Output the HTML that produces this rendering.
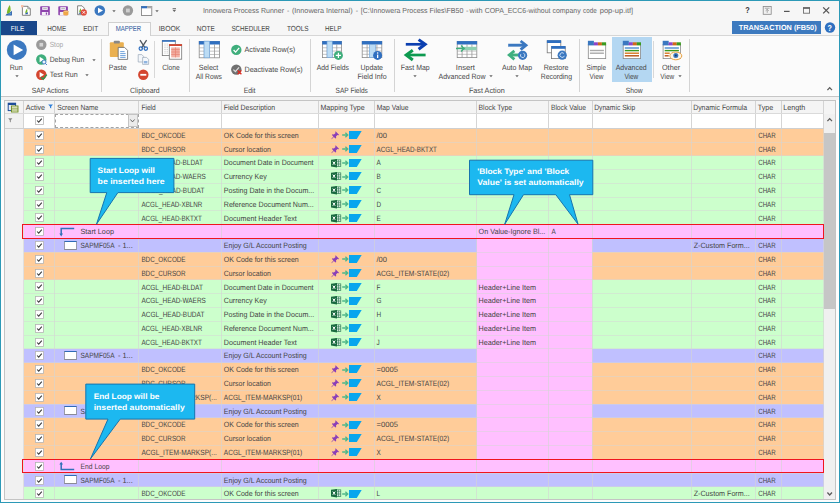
<!DOCTYPE html>
<html><head><meta charset="utf-8"><title>Innowera Process Runner</title><style>
html,body{margin:0;padding:0;}
body{width:840px;height:503px;overflow:hidden;background:#fbfbfb;font-family:"Liberation Sans",sans-serif;position:relative;}
.t{text-rendering:geometricPrecision;position:absolute;white-space:nowrap;line-height:1;transform-origin:0 0;}
.r{position:absolute;box-sizing:border-box;overflow:visible;}
</style></head><body>
<div class="r" style="left:0.00px;top:0.00px;width:840.00px;height:503.00px;background:#fdfdfd;"></div>
<div class="r" style="left:0.00px;top:0.00px;width:840.00px;height:21.00px;background:#f6f6f6;"></div>
<span class="t" style="left:202px;top:7px;font-size:7.3px;color:#666;transform:translate(0.90px,0) scaleX(0.9609);">Innowera Process Runner</span>
<span class="t" style="left:287px;top:7px;font-size:7.3px;color:#666;transform:translate(0.00px,0) scaleX(0.9460);">-</span>
<span class="t" style="left:291px;top:7px;font-size:7.3px;color:#666;transform:translate(0.90px,0) scaleX(0.9907);">(Innowera Internal)</span>
<span class="t" style="left:355px;top:7px;font-size:7.3px;color:#666;transform:translate(0.70px,0) scaleX(0.9460);">-</span>
<span class="t" style="left:360px;top:7px;font-size:7.3px;color:#666;transform:translate(0.70px,0) scaleX(0.9586);">[C:\Innowera Process</span>
<span class="t" style="left:429px;top:7px;font-size:7.3px;color:#666;transform:translate(0.50px,0) scaleX(0.9716);">Files\FB50</span>
<span class="t" style="left:465px;top:7px;font-size:7.3px;color:#666;transform:translate(0.90px,0) scaleX(0.9871);">-</span>
<span class="t" style="left:469px;top:7px;font-size:7.3px;color:#666;transform:translate(0.60px,0) scaleX(1.0091);">with</span>
<span class="t" style="left:484px;top:7px;font-size:7.3px;color:#666;transform:translate(0.70px,0) scaleX(0.9503);">COPA_ECC6-without</span>
<span class="t" style="left:552px;top:7px;font-size:7.3px;color:#666;transform:translate(0.40px,0) scaleX(0.9554);">company</span>
<span class="t" style="left:583px;top:7px;font-size:7.3px;color:#666;transform:translate(0.10px,0) scaleX(0.8591);">code</span>
<span class="t" style="left:599px;top:7px;font-size:7.3px;color:#666;transform:translate(0.70px,0) scaleX(1.0319);">pop-up.itf]</span>
<div class="r" style="left:0.00px;top:21.00px;width:840.00px;height:14.50px;background:#f6f6f6;"></div>
<div class="r" style="left:0.00px;top:35.00px;width:840.00px;height:1.00px;background:#d6d6d6;"></div>
<div class="r" style="left:1.00px;top:21.00px;width:35.50px;height:14.00px;background:#19478a;"></div>
<span class="t" style="left:10px;top:25px;font-size:7.4px;color:#fff;transform:translate(0.70px,0) scaleX(0.8638);">FILE</span>
<div class="r" style="left:108.00px;top:21.50px;width:43.00px;height:14.70px;background:#fbfbfb;border:1px solid #d0d0d0;border-bottom:none;"></div>
<span class="t" style="left:47px;top:25px;font-size:7.4px;color:#444;transform:translate(0.20px,0) scaleX(0.8558);">HOME</span>
<span class="t" style="left:83px;top:25px;font-size:7.4px;color:#444;transform:translate(0.20px,0) scaleX(0.8899);">EDIT</span>
<span class="t" style="left:115px;top:25px;font-size:7.4px;color:#2b579a;transform:translate(0.70px,0) scaleX(0.8159);">MAPPER</span>
<span class="t" style="left:158px;top:25px;font-size:7.4px;color:#444;transform:translate(0.70px,0) scaleX(0.9215);">IBOOK</span>
<span class="t" style="left:196px;top:25px;font-size:7.4px;color:#444;transform:translate(0.80px,0) scaleX(0.8805);">NOTE</span>
<span class="t" style="left:231px;top:25px;font-size:7.4px;color:#444;transform:translate(0.40px,0) scaleX(0.8435);">SCHEDULER</span>
<span class="t" style="left:286px;top:25px;font-size:7.4px;color:#444;transform:translate(0.90px,0) scaleX(0.8697);">TOOLS</span>
<span class="t" style="left:325px;top:25px;font-size:7.4px;color:#444;transform:translate(0.10px,0) scaleX(0.8432);">HELP</span>
<div class="r" style="left:731.70px;top:21.00px;width:89.10px;height:13.00px;background:#3d7abf;"></div>
<span class="t" style="left:738px;top:24px;font-size:7.4px;color:#fff;font-weight:bold;transform:translate(0.70px,0) scaleX(0.9882);">TRANSACTION (FB50)</span>
<div class="r" style="left:0.00px;top:36.00px;width:840.00px;height:59.40px;background:#fbfbfb;"></div>
<div class="r" style="left:0.00px;top:95.50px;width:840.00px;height:1.10px;background:#c6c6c6;"></div>
<div class="r" style="left:0.00px;top:96.60px;width:840.00px;height:3.40px;background:#f2f2f2;"></div>
<div class="r" style="left:101.00px;top:39.00px;width:1.00px;height:53.00px;background:#d4d4d4;"></div>
<div class="r" style="left:188.90px;top:39.00px;width:1.00px;height:53.00px;background:#d4d4d4;"></div>
<div class="r" style="left:309.90px;top:39.00px;width:1.00px;height:53.00px;background:#d4d4d4;"></div>
<div class="r" style="left:393.90px;top:39.00px;width:1.00px;height:53.00px;background:#d4d4d4;"></div>
<div class="r" style="left:578.90px;top:39.00px;width:1.00px;height:53.00px;background:#d4d4d4;"></div>
<div class="r" style="left:689.20px;top:39.00px;width:1.00px;height:53.00px;background:#d4d4d4;"></div>
<div class="r" style="left:154.00px;top:41.00px;width:1.00px;height:37.00px;background:#d8d8d8;"></div>
<div class="r" style="left:652.90px;top:41.00px;width:1.00px;height:37.00px;background:#d8d8d8;"></div>
<div class="r" style="left:612.00px;top:37.00px;width:39.50px;height:44.80px;background:#b4d7f2;"></div>
<span class="t" style="left:9px;top:64px;font-size:7.6px;color:#484848;transform:translate(0.70px,0) scaleX(0.9324);">Run</span>
<span class="t" style="left:49px;top:41px;font-size:7.6px;color:#a8a8a8;transform:translate(0.70px,0) scaleX(0.8635);">Stop</span>
<span class="t" style="left:49px;top:56px;font-size:7.6px;color:#484848;transform:translate(0.70px,0) scaleX(0.8973);">Debug Run</span>
<span class="t" style="left:49px;top:71px;font-size:7.6px;color:#484848;transform:translate(0.70px,0) scaleX(0.9336);">Test Run</span>
<span class="t" style="left:31px;top:87px;font-size:7.6px;color:#484848;transform:translate(0.70px,0) scaleX(0.8876);">SAP Actions</span>
<span class="t" style="left:108px;top:64px;font-size:7.6px;color:#484848;transform:translate(0.70px,0) scaleX(0.9262);">Paste</span>
<span class="t" style="left:162px;top:64px;font-size:7.6px;color:#484848;transform:translate(0.30px,0) scaleX(0.8762);">Clone</span>
<span class="t" style="left:130px;top:87px;font-size:7.6px;color:#484848;transform:translate(0.10px,0) scaleX(0.9099);">Clipboard</span>
<span class="t" style="left:198px;top:64px;font-size:7.6px;color:#484848;transform:translate(0.70px,0) scaleX(0.9279);">Select</span>
<span class="t" style="left:195px;top:73px;font-size:7.6px;color:#484848;transform:translate(0.70px,0) scaleX(0.8863);">All Rows</span>
<span class="t" style="left:244px;top:46px;font-size:7.6px;color:#484848;transform:translate(0.50px,0) scaleX(0.9528);">Activate Row(s)</span>
<span class="t" style="left:244px;top:66px;font-size:7.6px;color:#484848;transform:translate(0.50px,0) scaleX(0.9374);">Deactivate Row(s)</span>
<span class="t" style="left:243px;top:87px;font-size:7.6px;color:#484848;transform:translate(0.70px,0) scaleX(0.9010);">Edit</span>
<span class="t" style="left:316px;top:64px;font-size:7.6px;color:#484848;transform:translate(0.70px,0) scaleX(0.8967);">Add Fields</span>
<span class="t" style="left:360px;top:64px;font-size:7.6px;color:#484848;transform:translate(0.50px,0) scaleX(0.9181);">Update</span>
<span class="t" style="left:357px;top:73px;font-size:7.6px;color:#484848;transform:translate(0.50px,0) scaleX(0.9309);">Field Info</span>
<span class="t" style="left:335px;top:87px;font-size:7.6px;color:#484848;transform:translate(0.60px,0) scaleX(0.8623);">SAP Fields</span>
<span class="t" style="left:400px;top:64px;font-size:7.6px;color:#484848;transform:translate(0.70px,0) scaleX(0.9155);">Fast Map</span>
<span class="t" style="left:455px;top:64px;font-size:7.6px;color:#484848;transform:translate(0.80px,0) scaleX(1.0101);">Insert</span>
<span class="t" style="left:438px;top:73px;font-size:7.6px;color:#484848;transform:translate(0.50px,0) scaleX(0.9214);">Advanced Row</span>
<span class="t" style="left:468px;top:87px;font-size:7.6px;color:#484848;transform:translate(0.90px,0) scaleX(0.9522);">Fast Action</span>
<span class="t" style="left:502px;top:64px;font-size:7.6px;color:#484848;transform:translate(0.00px,0) scaleX(0.9253);">Auto Map</span>
<span class="t" style="left:543px;top:64px;font-size:7.6px;color:#484848;transform:translate(0.70px,0) scaleX(0.9319);">Restore</span>
<span class="t" style="left:540px;top:73px;font-size:7.6px;color:#484848;transform:translate(0.70px,0) scaleX(0.9035);">Recording</span>
<span class="t" style="left:586px;top:64px;font-size:7.6px;color:#484848;transform:translate(0.60px,0) scaleX(0.8351);">Simple</span>
<span class="t" style="left:589px;top:73px;font-size:7.6px;color:#484848;transform:translate(0.60px,0) scaleX(0.8447);">View</span>
<span class="t" style="left:615px;top:64px;font-size:7.6px;color:#484848;transform:translate(0.70px,0) scaleX(0.9171);">Advanced</span>
<span class="t" style="left:624px;top:73px;font-size:7.6px;color:#484848;transform:translate(0.40px,0) scaleX(0.8509);">View</span>
<span class="t" style="left:662px;top:64px;font-size:7.6px;color:#484848;transform:translate(0.00px,0) scaleX(0.9522);">Other</span>
<span class="t" style="left:660px;top:73px;font-size:7.6px;color:#484848;transform:translate(0.30px,0) scaleX(0.8509);">View</span>
<span class="t" style="left:625px;top:87px;font-size:7.6px;color:#484848;transform:translate(0.70px,0) scaleX(0.8837);">Show</span>
<svg class="r" style="left:14.80px;top:74.90px" width="4" height="2.4" viewBox="0 0 4 2.4"><path d="M0.3 0.2H3.7L2 2.2Z" fill="#666"/></svg>
<svg class="r" style="left:91.50px;top:58.70px" width="4" height="2.4" viewBox="0 0 4 2.4"><path d="M0.3 0.2H3.7L2 2.2Z" fill="#666"/></svg>
<svg class="r" style="left:85.00px;top:74.00px" width="4" height="2.4" viewBox="0 0 4 2.4"><path d="M0.3 0.2H3.7L2 2.2Z" fill="#666"/></svg>
<svg class="r" style="left:413.40px;top:74.90px" width="4" height="2.4" viewBox="0 0 4 2.4"><path d="M0.3 0.2H3.7L2 2.2Z" fill="#666"/></svg>
<svg class="r" style="left:488.50px;top:74.90px" width="4" height="2.4" viewBox="0 0 4 2.4"><path d="M0.3 0.2H3.7L2 2.2Z" fill="#666"/></svg>
<svg class="r" style="left:515.10px;top:74.90px" width="4" height="2.4" viewBox="0 0 4 2.4"><path d="M0.3 0.2H3.7L2 2.2Z" fill="#666"/></svg>
<svg class="r" style="left:677.50px;top:74.90px" width="4" height="2.4" viewBox="0 0 4 2.4"><path d="M0.3 0.2H3.7L2 2.2Z" fill="#666"/></svg>
<svg class="r" style="left:111.50px;top:9.70px" width="4" height="2.4" viewBox="0 0 4 2.4"><path d="M0.3 0.2H3.7L2 2.2Z" fill="#666"/></svg>
<svg class="r" style="left:155.00px;top:9.70px" width="4" height="2.4" viewBox="0 0 4 2.4"><path d="M0.3 0.2H3.7L2 2.2Z" fill="#666"/></svg>
<div class="r" style="left:4.00px;top:100.00px;width:831.00px;height:399.30px;background:#ffffff;"></div>
<div class="r" style="left:4.00px;top:100.00px;width:831.00px;height:13.60px;background:#f4f4f4;"></div>
<div class="r" style="left:23.50px;top:113.60px;width:800.20px;height:14.60px;background:#ffffff;"></div>
<div class="r" style="left:4.00px;top:113.60px;width:19.50px;height:385.70px;background:#f1f1f1;"></div>
<div class="r" style="left:23.50px;top:128.25px;width:800.20px;height:13.79px;background:#ffcc99;"></div>
<div class="r" style="left:23.50px;top:142.04px;width:800.20px;height:13.79px;background:#ffcc99;"></div>
<div class="r" style="left:23.50px;top:155.83px;width:800.20px;height:13.79px;background:#ccffcc;"></div>
<div class="r" style="left:23.50px;top:169.62px;width:800.20px;height:13.79px;background:#ccffcc;"></div>
<div class="r" style="left:23.50px;top:183.41px;width:800.20px;height:13.79px;background:#ccffcc;"></div>
<div class="r" style="left:23.50px;top:197.20px;width:800.20px;height:13.79px;background:#ccffcc;"></div>
<div class="r" style="left:23.50px;top:210.99px;width:800.20px;height:13.79px;background:#ccffcc;"></div>
<div class="r" style="left:23.50px;top:224.78px;width:800.20px;height:13.79px;background:#ffc0ff;"></div>
<div class="r" style="left:23.50px;top:238.57px;width:800.20px;height:13.79px;background:#c0c0ff;"></div>
<div class="r" style="left:476.60px;top:238.57px;width:115.60px;height:13.79px;background:#ffc0ff;"></div>
<div class="r" style="left:23.50px;top:252.36px;width:800.20px;height:13.79px;background:#ffcc99;"></div>
<div class="r" style="left:476.60px;top:252.36px;width:115.60px;height:13.79px;background:#ffc0ff;"></div>
<div class="r" style="left:23.50px;top:266.15px;width:800.20px;height:13.79px;background:#ffcc99;"></div>
<div class="r" style="left:476.60px;top:266.15px;width:115.60px;height:13.79px;background:#ffc0ff;"></div>
<div class="r" style="left:23.50px;top:279.94px;width:800.20px;height:13.79px;background:#ccffcc;"></div>
<div class="r" style="left:476.60px;top:279.94px;width:115.60px;height:13.79px;background:#ffc0ff;"></div>
<div class="r" style="left:23.50px;top:293.73px;width:800.20px;height:13.79px;background:#ccffcc;"></div>
<div class="r" style="left:476.60px;top:293.73px;width:115.60px;height:13.79px;background:#ffc0ff;"></div>
<div class="r" style="left:23.50px;top:307.52px;width:800.20px;height:13.79px;background:#ccffcc;"></div>
<div class="r" style="left:476.60px;top:307.52px;width:115.60px;height:13.79px;background:#ffc0ff;"></div>
<div class="r" style="left:23.50px;top:321.31px;width:800.20px;height:13.79px;background:#ccffcc;"></div>
<div class="r" style="left:476.60px;top:321.31px;width:115.60px;height:13.79px;background:#ffc0ff;"></div>
<div class="r" style="left:23.50px;top:335.10px;width:800.20px;height:13.79px;background:#ccffcc;"></div>
<div class="r" style="left:476.60px;top:335.10px;width:115.60px;height:13.79px;background:#ffc0ff;"></div>
<div class="r" style="left:23.50px;top:348.89px;width:800.20px;height:13.79px;background:#c0c0ff;"></div>
<div class="r" style="left:476.60px;top:348.89px;width:115.60px;height:13.79px;background:#ffc0ff;"></div>
<div class="r" style="left:23.50px;top:362.68px;width:800.20px;height:13.79px;background:#ffcc99;"></div>
<div class="r" style="left:476.60px;top:362.68px;width:115.60px;height:13.79px;background:#ffc0ff;"></div>
<div class="r" style="left:23.50px;top:376.47px;width:800.20px;height:13.79px;background:#ffcc99;"></div>
<div class="r" style="left:476.60px;top:376.47px;width:115.60px;height:13.79px;background:#ffc0ff;"></div>
<div class="r" style="left:23.50px;top:390.26px;width:800.20px;height:13.79px;background:#ffcc99;"></div>
<div class="r" style="left:476.60px;top:390.26px;width:115.60px;height:13.79px;background:#ffc0ff;"></div>
<div class="r" style="left:23.50px;top:404.05px;width:800.20px;height:13.79px;background:#c0c0ff;"></div>
<div class="r" style="left:476.60px;top:404.05px;width:115.60px;height:13.79px;background:#ffc0ff;"></div>
<div class="r" style="left:23.50px;top:417.84px;width:800.20px;height:13.79px;background:#ffcc99;"></div>
<div class="r" style="left:476.60px;top:417.84px;width:115.60px;height:13.79px;background:#ffc0ff;"></div>
<div class="r" style="left:23.50px;top:431.63px;width:800.20px;height:13.79px;background:#ffcc99;"></div>
<div class="r" style="left:476.60px;top:431.63px;width:115.60px;height:13.79px;background:#ffc0ff;"></div>
<div class="r" style="left:23.50px;top:445.42px;width:800.20px;height:13.79px;background:#ffcc99;"></div>
<div class="r" style="left:476.60px;top:445.42px;width:115.60px;height:13.79px;background:#ffc0ff;"></div>
<div class="r" style="left:23.50px;top:459.21px;width:800.20px;height:13.79px;background:#ffc0ff;"></div>
<div class="r" style="left:23.50px;top:473.00px;width:800.20px;height:13.79px;background:#c0c0ff;"></div>
<div class="r" style="left:23.50px;top:486.79px;width:800.20px;height:12.31px;background:#ccffcc;"></div>
<div class="r" style="left:23.50px;top:127.75px;width:800.20px;height:1.00px;background:rgba(214,214,214,0.5);"></div>
<div class="r" style="left:23.50px;top:141.54px;width:800.20px;height:1.00px;background:rgba(214,214,214,0.5);"></div>
<div class="r" style="left:23.50px;top:155.33px;width:800.20px;height:1.00px;background:rgba(214,214,214,0.5);"></div>
<div class="r" style="left:23.50px;top:169.12px;width:800.20px;height:1.00px;background:rgba(214,214,214,0.5);"></div>
<div class="r" style="left:23.50px;top:182.91px;width:800.20px;height:1.00px;background:rgba(214,214,214,0.5);"></div>
<div class="r" style="left:23.50px;top:196.70px;width:800.20px;height:1.00px;background:rgba(214,214,214,0.5);"></div>
<div class="r" style="left:23.50px;top:210.49px;width:800.20px;height:1.00px;background:rgba(214,214,214,0.5);"></div>
<div class="r" style="left:23.50px;top:224.28px;width:800.20px;height:1.00px;background:rgba(214,214,214,0.5);"></div>
<div class="r" style="left:23.50px;top:238.07px;width:800.20px;height:1.00px;background:rgba(214,214,214,0.5);"></div>
<div class="r" style="left:23.50px;top:251.86px;width:800.20px;height:1.00px;background:rgba(214,214,214,0.5);"></div>
<div class="r" style="left:23.50px;top:265.65px;width:800.20px;height:1.00px;background:rgba(214,214,214,0.5);"></div>
<div class="r" style="left:23.50px;top:279.44px;width:800.20px;height:1.00px;background:rgba(214,214,214,0.5);"></div>
<div class="r" style="left:23.50px;top:293.23px;width:800.20px;height:1.00px;background:rgba(214,214,214,0.5);"></div>
<div class="r" style="left:23.50px;top:307.02px;width:800.20px;height:1.00px;background:rgba(214,214,214,0.5);"></div>
<div class="r" style="left:23.50px;top:320.81px;width:800.20px;height:1.00px;background:rgba(214,214,214,0.5);"></div>
<div class="r" style="left:23.50px;top:334.60px;width:800.20px;height:1.00px;background:rgba(214,214,214,0.5);"></div>
<div class="r" style="left:23.50px;top:348.39px;width:800.20px;height:1.00px;background:rgba(214,214,214,0.5);"></div>
<div class="r" style="left:23.50px;top:362.18px;width:800.20px;height:1.00px;background:rgba(214,214,214,0.5);"></div>
<div class="r" style="left:23.50px;top:375.97px;width:800.20px;height:1.00px;background:rgba(214,214,214,0.5);"></div>
<div class="r" style="left:23.50px;top:389.76px;width:800.20px;height:1.00px;background:rgba(214,214,214,0.5);"></div>
<div class="r" style="left:23.50px;top:403.55px;width:800.20px;height:1.00px;background:rgba(214,214,214,0.5);"></div>
<div class="r" style="left:23.50px;top:417.34px;width:800.20px;height:1.00px;background:rgba(214,214,214,0.5);"></div>
<div class="r" style="left:23.50px;top:431.13px;width:800.20px;height:1.00px;background:rgba(214,214,214,0.5);"></div>
<div class="r" style="left:23.50px;top:444.92px;width:800.20px;height:1.00px;background:rgba(214,214,214,0.5);"></div>
<div class="r" style="left:23.50px;top:458.71px;width:800.20px;height:1.00px;background:rgba(214,214,214,0.5);"></div>
<div class="r" style="left:23.50px;top:472.50px;width:800.20px;height:1.00px;background:rgba(214,214,214,0.5);"></div>
<div class="r" style="left:23.50px;top:486.29px;width:800.20px;height:1.00px;background:rgba(214,214,214,0.5);"></div>
<div class="r" style="left:23.00px;top:100.00px;width:1.00px;height:399.30px;background:rgba(212,212,212,0.6);"></div>
<div class="r" style="left:54.10px;top:100.00px;width:1.00px;height:399.30px;background:rgba(212,212,212,0.6);"></div>
<div class="r" style="left:138.00px;top:100.00px;width:1.00px;height:399.30px;background:rgba(212,212,212,0.6);"></div>
<div class="r" style="left:221.00px;top:100.00px;width:1.00px;height:399.30px;background:rgba(212,212,212,0.6);"></div>
<div class="r" style="left:318.10px;top:100.00px;width:1.00px;height:399.30px;background:rgba(212,212,212,0.6);"></div>
<div class="r" style="left:373.90px;top:100.00px;width:1.00px;height:399.30px;background:rgba(212,212,212,0.6);"></div>
<div class="r" style="left:476.10px;top:100.00px;width:1.00px;height:399.30px;background:rgba(212,212,212,0.6);"></div>
<div class="r" style="left:548.20px;top:100.00px;width:1.00px;height:399.30px;background:rgba(212,212,212,0.6);"></div>
<div class="r" style="left:591.70px;top:100.00px;width:1.00px;height:399.30px;background:rgba(212,212,212,0.6);"></div>
<div class="r" style="left:691.00px;top:100.00px;width:1.00px;height:399.30px;background:rgba(212,212,212,0.6);"></div>
<div class="r" style="left:754.50px;top:100.00px;width:1.00px;height:399.30px;background:rgba(212,212,212,0.6);"></div>
<div class="r" style="left:781.00px;top:100.00px;width:1.00px;height:399.30px;background:rgba(212,212,212,0.6);"></div>
<div class="r" style="left:823.20px;top:100.00px;width:1.00px;height:399.30px;background:rgba(212,212,212,0.6);"></div>
<div class="r" style="left:23.00px;top:100.00px;width:1.00px;height:28.20px;background:rgba(200,200,200,0.55);"></div>
<div class="r" style="left:54.10px;top:100.00px;width:1.00px;height:28.20px;background:rgba(200,200,200,0.55);"></div>
<div class="r" style="left:138.00px;top:100.00px;width:1.00px;height:28.20px;background:rgba(200,200,200,0.55);"></div>
<div class="r" style="left:221.00px;top:100.00px;width:1.00px;height:28.20px;background:rgba(200,200,200,0.55);"></div>
<div class="r" style="left:318.10px;top:100.00px;width:1.00px;height:28.20px;background:rgba(200,200,200,0.55);"></div>
<div class="r" style="left:373.90px;top:100.00px;width:1.00px;height:28.20px;background:rgba(200,200,200,0.55);"></div>
<div class="r" style="left:476.10px;top:100.00px;width:1.00px;height:28.20px;background:rgba(200,200,200,0.55);"></div>
<div class="r" style="left:548.20px;top:100.00px;width:1.00px;height:28.20px;background:rgba(200,200,200,0.55);"></div>
<div class="r" style="left:591.70px;top:100.00px;width:1.00px;height:28.20px;background:rgba(200,200,200,0.55);"></div>
<div class="r" style="left:691.00px;top:100.00px;width:1.00px;height:28.20px;background:rgba(200,200,200,0.55);"></div>
<div class="r" style="left:754.50px;top:100.00px;width:1.00px;height:28.20px;background:rgba(200,200,200,0.55);"></div>
<div class="r" style="left:781.00px;top:100.00px;width:1.00px;height:28.20px;background:rgba(200,200,200,0.55);"></div>
<div class="r" style="left:823.20px;top:100.00px;width:1.00px;height:28.20px;background:rgba(200,200,200,0.55);"></div>
<div class="r" style="left:4.00px;top:113.10px;width:831.00px;height:1.00px;background:#dadada;"></div>
<div class="r" style="left:4.00px;top:127.70px;width:819.70px;height:1.00px;background:#cfcfcf;"></div>
<span class="t" style="left:25px;top:104px;font-size:7.6px;color:#444;transform:translate(0.70px,0) scaleX(0.9277);">Active</span>
<span class="t" style="left:57px;top:104px;font-size:7.6px;color:#444;transform:translate(0.20px,0) scaleX(0.8867);">Screen Name</span>
<span class="t" style="left:141px;top:104px;font-size:7.6px;color:#444;transform:translate(0.40px,0) scaleX(0.8681);">Field</span>
<span class="t" style="left:223px;top:104px;font-size:7.6px;color:#444;transform:translate(0.70px,0) scaleX(0.9099);">Field Description</span>
<span class="t" style="left:320px;top:104px;font-size:7.6px;color:#444;transform:translate(0.50px,0) scaleX(0.9285);">Mapping Type</span>
<span class="t" style="left:376px;top:104px;font-size:7.6px;color:#444;transform:translate(0.70px,0) scaleX(0.8890);">Map Value</span>
<span class="t" style="left:478px;top:104px;font-size:7.6px;color:#444;transform:translate(0.50px,0) scaleX(0.9099);">Block Type</span>
<span class="t" style="left:550px;top:104px;font-size:7.6px;color:#444;transform:translate(0.90px,0) scaleX(0.8845);">Block Value</span>
<span class="t" style="left:594px;top:104px;font-size:7.6px;color:#444;transform:translate(0.20px,0) scaleX(0.8825);">Dynamic Skip</span>
<span class="t" style="left:693px;top:104px;font-size:7.6px;color:#444;transform:translate(0.20px,0) scaleX(0.9068);">Dynamic Formula</span>
<span class="t" style="left:757px;top:104px;font-size:7.6px;color:#444;transform:translate(0.70px,0) scaleX(0.9407);">Type</span>
<span class="t" style="left:783px;top:104px;font-size:7.6px;color:#444;transform:translate(0.20px,0) scaleX(0.9464);">Length</span>
<svg class="r" style="left:34.70px;top:116.40px" width="8.8" height="8.8" viewBox="0 0 8.8 8.8"><rect x="0.4" y="0.4" width="8" height="8" fill="#fff" stroke="#b4b4b4" stroke-width="0.8"/><path d="M2.1 4.5L3.7 6.2L6.8 2.6" fill="none" stroke="#3c3c3c" stroke-width="1.05"/></svg>
<svg class="r" style="left:34.70px;top:130.75px" width="8.8" height="8.8" viewBox="0 0 8.8 8.8"><rect x="0.4" y="0.4" width="8" height="8" fill="#fff" stroke="#b4b4b4" stroke-width="0.8"/><path d="M2.1 4.5L3.7 6.2L6.8 2.6" fill="none" stroke="#3c3c3c" stroke-width="1.05"/></svg>
<svg class="r" style="left:34.70px;top:144.53px" width="8.8" height="8.8" viewBox="0 0 8.8 8.8"><rect x="0.4" y="0.4" width="8" height="8" fill="#fff" stroke="#b4b4b4" stroke-width="0.8"/><path d="M2.1 4.5L3.7 6.2L6.8 2.6" fill="none" stroke="#3c3c3c" stroke-width="1.05"/></svg>
<svg class="r" style="left:34.70px;top:158.32px" width="8.8" height="8.8" viewBox="0 0 8.8 8.8"><rect x="0.4" y="0.4" width="8" height="8" fill="#fff" stroke="#b4b4b4" stroke-width="0.8"/><path d="M2.1 4.5L3.7 6.2L6.8 2.6" fill="none" stroke="#3c3c3c" stroke-width="1.05"/></svg>
<svg class="r" style="left:34.70px;top:172.12px" width="8.8" height="8.8" viewBox="0 0 8.8 8.8"><rect x="0.4" y="0.4" width="8" height="8" fill="#fff" stroke="#b4b4b4" stroke-width="0.8"/><path d="M2.1 4.5L3.7 6.2L6.8 2.6" fill="none" stroke="#3c3c3c" stroke-width="1.05"/></svg>
<svg class="r" style="left:34.70px;top:185.91px" width="8.8" height="8.8" viewBox="0 0 8.8 8.8"><rect x="0.4" y="0.4" width="8" height="8" fill="#fff" stroke="#b4b4b4" stroke-width="0.8"/><path d="M2.1 4.5L3.7 6.2L6.8 2.6" fill="none" stroke="#3c3c3c" stroke-width="1.05"/></svg>
<svg class="r" style="left:34.70px;top:199.69px" width="8.8" height="8.8" viewBox="0 0 8.8 8.8"><rect x="0.4" y="0.4" width="8" height="8" fill="#fff" stroke="#b4b4b4" stroke-width="0.8"/><path d="M2.1 4.5L3.7 6.2L6.8 2.6" fill="none" stroke="#3c3c3c" stroke-width="1.05"/></svg>
<svg class="r" style="left:34.70px;top:213.49px" width="8.8" height="8.8" viewBox="0 0 8.8 8.8"><rect x="0.4" y="0.4" width="8" height="8" fill="#fff" stroke="#b4b4b4" stroke-width="0.8"/><path d="M2.1 4.5L3.7 6.2L6.8 2.6" fill="none" stroke="#3c3c3c" stroke-width="1.05"/></svg>
<svg class="r" style="left:34.70px;top:227.28px" width="8.8" height="8.8" viewBox="0 0 8.8 8.8"><rect x="0.4" y="0.4" width="8" height="8" fill="#fff" stroke="#b4b4b4" stroke-width="0.8"/><path d="M2.1 4.5L3.7 6.2L6.8 2.6" fill="none" stroke="#3c3c3c" stroke-width="1.05"/></svg>
<svg class="r" style="left:34.70px;top:241.06px" width="8.8" height="8.8" viewBox="0 0 8.8 8.8"><rect x="0.4" y="0.4" width="8" height="8" fill="#fff" stroke="#b4b4b4" stroke-width="0.8"/><path d="M2.1 4.5L3.7 6.2L6.8 2.6" fill="none" stroke="#3c3c3c" stroke-width="1.05"/></svg>
<svg class="r" style="left:34.70px;top:254.85px" width="8.8" height="8.8" viewBox="0 0 8.8 8.8"><rect x="0.4" y="0.4" width="8" height="8" fill="#fff" stroke="#b4b4b4" stroke-width="0.8"/><path d="M2.1 4.5L3.7 6.2L6.8 2.6" fill="none" stroke="#3c3c3c" stroke-width="1.05"/></svg>
<svg class="r" style="left:34.70px;top:268.64px" width="8.8" height="8.8" viewBox="0 0 8.8 8.8"><rect x="0.4" y="0.4" width="8" height="8" fill="#fff" stroke="#b4b4b4" stroke-width="0.8"/><path d="M2.1 4.5L3.7 6.2L6.8 2.6" fill="none" stroke="#3c3c3c" stroke-width="1.05"/></svg>
<svg class="r" style="left:34.70px;top:282.44px" width="8.8" height="8.8" viewBox="0 0 8.8 8.8"><rect x="0.4" y="0.4" width="8" height="8" fill="#fff" stroke="#b4b4b4" stroke-width="0.8"/><path d="M2.1 4.5L3.7 6.2L6.8 2.6" fill="none" stroke="#3c3c3c" stroke-width="1.05"/></svg>
<svg class="r" style="left:34.70px;top:296.23px" width="8.8" height="8.8" viewBox="0 0 8.8 8.8"><rect x="0.4" y="0.4" width="8" height="8" fill="#fff" stroke="#b4b4b4" stroke-width="0.8"/><path d="M2.1 4.5L3.7 6.2L6.8 2.6" fill="none" stroke="#3c3c3c" stroke-width="1.05"/></svg>
<svg class="r" style="left:34.70px;top:310.01px" width="8.8" height="8.8" viewBox="0 0 8.8 8.8"><rect x="0.4" y="0.4" width="8" height="8" fill="#fff" stroke="#b4b4b4" stroke-width="0.8"/><path d="M2.1 4.5L3.7 6.2L6.8 2.6" fill="none" stroke="#3c3c3c" stroke-width="1.05"/></svg>
<svg class="r" style="left:34.70px;top:323.81px" width="8.8" height="8.8" viewBox="0 0 8.8 8.8"><rect x="0.4" y="0.4" width="8" height="8" fill="#fff" stroke="#b4b4b4" stroke-width="0.8"/><path d="M2.1 4.5L3.7 6.2L6.8 2.6" fill="none" stroke="#3c3c3c" stroke-width="1.05"/></svg>
<svg class="r" style="left:34.70px;top:337.60px" width="8.8" height="8.8" viewBox="0 0 8.8 8.8"><rect x="0.4" y="0.4" width="8" height="8" fill="#fff" stroke="#b4b4b4" stroke-width="0.8"/><path d="M2.1 4.5L3.7 6.2L6.8 2.6" fill="none" stroke="#3c3c3c" stroke-width="1.05"/></svg>
<svg class="r" style="left:34.70px;top:351.38px" width="8.8" height="8.8" viewBox="0 0 8.8 8.8"><rect x="0.4" y="0.4" width="8" height="8" fill="#fff" stroke="#b4b4b4" stroke-width="0.8"/><path d="M2.1 4.5L3.7 6.2L6.8 2.6" fill="none" stroke="#3c3c3c" stroke-width="1.05"/></svg>
<svg class="r" style="left:34.70px;top:365.17px" width="8.8" height="8.8" viewBox="0 0 8.8 8.8"><rect x="0.4" y="0.4" width="8" height="8" fill="#fff" stroke="#b4b4b4" stroke-width="0.8"/><path d="M2.1 4.5L3.7 6.2L6.8 2.6" fill="none" stroke="#3c3c3c" stroke-width="1.05"/></svg>
<svg class="r" style="left:34.70px;top:378.96px" width="8.8" height="8.8" viewBox="0 0 8.8 8.8"><rect x="0.4" y="0.4" width="8" height="8" fill="#fff" stroke="#b4b4b4" stroke-width="0.8"/><path d="M2.1 4.5L3.7 6.2L6.8 2.6" fill="none" stroke="#3c3c3c" stroke-width="1.05"/></svg>
<svg class="r" style="left:34.70px;top:392.75px" width="8.8" height="8.8" viewBox="0 0 8.8 8.8"><rect x="0.4" y="0.4" width="8" height="8" fill="#fff" stroke="#b4b4b4" stroke-width="0.8"/><path d="M2.1 4.5L3.7 6.2L6.8 2.6" fill="none" stroke="#3c3c3c" stroke-width="1.05"/></svg>
<svg class="r" style="left:34.70px;top:406.54px" width="8.8" height="8.8" viewBox="0 0 8.8 8.8"><rect x="0.4" y="0.4" width="8" height="8" fill="#fff" stroke="#b4b4b4" stroke-width="0.8"/><path d="M2.1 4.5L3.7 6.2L6.8 2.6" fill="none" stroke="#3c3c3c" stroke-width="1.05"/></svg>
<svg class="r" style="left:34.70px;top:420.33px" width="8.8" height="8.8" viewBox="0 0 8.8 8.8"><rect x="0.4" y="0.4" width="8" height="8" fill="#fff" stroke="#b4b4b4" stroke-width="0.8"/><path d="M2.1 4.5L3.7 6.2L6.8 2.6" fill="none" stroke="#3c3c3c" stroke-width="1.05"/></svg>
<svg class="r" style="left:34.70px;top:434.12px" width="8.8" height="8.8" viewBox="0 0 8.8 8.8"><rect x="0.4" y="0.4" width="8" height="8" fill="#fff" stroke="#b4b4b4" stroke-width="0.8"/><path d="M2.1 4.5L3.7 6.2L6.8 2.6" fill="none" stroke="#3c3c3c" stroke-width="1.05"/></svg>
<svg class="r" style="left:34.70px;top:447.91px" width="8.8" height="8.8" viewBox="0 0 8.8 8.8"><rect x="0.4" y="0.4" width="8" height="8" fill="#fff" stroke="#b4b4b4" stroke-width="0.8"/><path d="M2.1 4.5L3.7 6.2L6.8 2.6" fill="none" stroke="#3c3c3c" stroke-width="1.05"/></svg>
<svg class="r" style="left:34.70px;top:461.70px" width="8.8" height="8.8" viewBox="0 0 8.8 8.8"><rect x="0.4" y="0.4" width="8" height="8" fill="#fff" stroke="#b4b4b4" stroke-width="0.8"/><path d="M2.1 4.5L3.7 6.2L6.8 2.6" fill="none" stroke="#3c3c3c" stroke-width="1.05"/></svg>
<svg class="r" style="left:34.70px;top:475.50px" width="8.8" height="8.8" viewBox="0 0 8.8 8.8"><rect x="0.4" y="0.4" width="8" height="8" fill="#fff" stroke="#b4b4b4" stroke-width="0.8"/><path d="M2.1 4.5L3.7 6.2L6.8 2.6" fill="none" stroke="#3c3c3c" stroke-width="1.05"/></svg>
<svg class="r" style="left:34.70px;top:489.28px" width="8.8" height="8.8" viewBox="0 0 8.8 8.8"><rect x="0.4" y="0.4" width="8" height="8" fill="#fff" stroke="#b4b4b4" stroke-width="0.8"/><path d="M2.1 4.5L3.7 6.2L6.8 2.6" fill="none" stroke="#3c3c3c" stroke-width="1.05"/></svg>
<span class="t" style="left:141px;top:132px;font-size:7.6px;color:#444;transform:translate(0.40px,0) scaleX(0.8306);">BDC_OKCODE</span>
<span class="t" style="left:223px;top:132px;font-size:7.6px;color:#444;transform:translate(0.80px,0) scaleX(0.9247);">OK Code for this screen</span>
<span class="t" style="left:376px;top:132px;font-size:7.6px;color:#444;transform:translate(0.50px,0) scaleX(0.9938);">/00</span>
<span class="t" style="left:758px;top:132px;font-size:7.6px;color:#444;transform:translate(0.20px,0) scaleX(0.8126);">CHAR</span>
<svg class="r" style="left:330.60px;top:130.85px" width="8.5" height="8.5" viewBox="0 0 8.5 8.5"><path d="M4.6 0.3L8.2 3.9L7.2 4.3L6.4 3.9L5 5.6L5.2 7L4.4 7.6L2.9 6.1L0.6 8.2L0.3 7.9L2.4 5.6L0.9 4.1L1.5 3.3L2.9 3.5L4.6 2.1L4.2 1.3Z" fill="#8a3fb8"/></svg>
<svg class="r" style="left:341.50px;top:132.25px" width="6.4" height="6" viewBox="0 0 6.4 6"><path d="M0.2 3H5.6M3.4 0.7L5.8 3L3.4 5.3" fill="none" stroke="#4db88a" stroke-width="1.3"/></svg>
<svg class="r" style="left:348.70px;top:131.05px" width="12.8" height="7.9" viewBox="0 0 12.8 7.9"><path d="M0 0H12.7L7.8 7.9H0Z" fill="#08a6ee"/></svg>
<span class="t" style="left:141px;top:146px;font-size:7.6px;color:#444;transform:translate(0.40px,0) scaleX(0.8307);">BDC_CURSOR</span>
<span class="t" style="left:223px;top:146px;font-size:7.6px;color:#444;transform:translate(0.80px,0) scaleX(0.9235);">Cursor location</span>
<span class="t" style="left:376px;top:146px;font-size:7.6px;color:#444;transform:translate(0.50px,0) scaleX(0.8280);">ACGL_HEAD-BKTXT</span>
<span class="t" style="left:758px;top:146px;font-size:7.6px;color:#444;transform:translate(0.20px,0) scaleX(0.8126);">CHAR</span>
<svg class="r" style="left:330.60px;top:144.64px" width="8.5" height="8.5" viewBox="0 0 8.5 8.5"><path d="M4.6 0.3L8.2 3.9L7.2 4.3L6.4 3.9L5 5.6L5.2 7L4.4 7.6L2.9 6.1L0.6 8.2L0.3 7.9L2.4 5.6L0.9 4.1L1.5 3.3L2.9 3.5L4.6 2.1L4.2 1.3Z" fill="#8a3fb8"/></svg>
<svg class="r" style="left:341.50px;top:146.04px" width="6.4" height="6" viewBox="0 0 6.4 6"><path d="M0.2 3H5.6M3.4 0.7L5.8 3L3.4 5.3" fill="none" stroke="#4db88a" stroke-width="1.3"/></svg>
<svg class="r" style="left:348.70px;top:144.84px" width="12.8" height="7.9" viewBox="0 0 12.8 7.9"><path d="M0 0H12.7L7.8 7.9H0Z" fill="#08a6ee"/></svg>
<span class="t" style="left:141px;top:159px;font-size:7.6px;color:#444;transform:translate(0.40px,0) scaleX(0.8482);">ACGL_HEAD-BLDAT</span>
<span class="t" style="left:223px;top:159px;font-size:7.6px;color:#444;transform:translate(0.80px,0) scaleX(0.9203);">Document Date in Document</span>
<span class="t" style="left:376px;top:159px;font-size:7.6px;color:#444;transform:translate(0.50px,0) scaleX(0.8400);">A</span>
<span class="t" style="left:758px;top:159px;font-size:7.6px;color:#444;transform:translate(0.20px,0) scaleX(0.8126);">CHAR</span>
<svg class="r" style="left:330.90px;top:158.53px" width="10.4" height="8.4" viewBox="0 0 10.4 8.4"><rect x="4.6" y="0.9" width="5.2" height="6.6" fill="#f4faf6" stroke="#2a7a50" stroke-width="0.7"/><path d="M7.5 0.9V7.5M5.8 2.6H9.8M5.8 4.2H9.8M5.8 5.8H9.8" stroke="#2a7a50" stroke-width="0.6"/><path d="M0 0.8L6 0V8.4L0 7.6Z" fill="#1a6a40"/><path d="M1.8 2.6L4.2 5.8M4.2 2.6L1.8 5.8" stroke="#fff" stroke-width="1"/></svg>
<svg class="r" style="left:341.50px;top:159.83px" width="6.4" height="6" viewBox="0 0 6.4 6"><path d="M0.2 3H5.6M3.4 0.7L5.8 3L3.4 5.3" fill="none" stroke="#4db88a" stroke-width="1.3"/></svg>
<svg class="r" style="left:348.70px;top:158.63px" width="12.8" height="7.9" viewBox="0 0 12.8 7.9"><path d="M0 0H12.7L7.8 7.9H0Z" fill="#08a6ee"/></svg>
<span class="t" style="left:141px;top:173px;font-size:7.6px;color:#444;transform:translate(0.40px,0) scaleX(0.8469);">ACGL_HEAD-WAERS</span>
<span class="t" style="left:223px;top:173px;font-size:7.6px;color:#444;transform:translate(0.80px,0) scaleX(0.9340);">Currency Key</span>
<span class="t" style="left:376px;top:173px;font-size:7.6px;color:#444;transform:translate(0.50px,0) scaleX(0.8400);">B</span>
<span class="t" style="left:758px;top:173px;font-size:7.6px;color:#444;transform:translate(0.20px,0) scaleX(0.8126);">CHAR</span>
<svg class="r" style="left:330.90px;top:172.32px" width="10.4" height="8.4" viewBox="0 0 10.4 8.4"><rect x="4.6" y="0.9" width="5.2" height="6.6" fill="#f4faf6" stroke="#2a7a50" stroke-width="0.7"/><path d="M7.5 0.9V7.5M5.8 2.6H9.8M5.8 4.2H9.8M5.8 5.8H9.8" stroke="#2a7a50" stroke-width="0.6"/><path d="M0 0.8L6 0V8.4L0 7.6Z" fill="#1a6a40"/><path d="M1.8 2.6L4.2 5.8M4.2 2.6L1.8 5.8" stroke="#fff" stroke-width="1"/></svg>
<svg class="r" style="left:341.50px;top:173.62px" width="6.4" height="6" viewBox="0 0 6.4 6"><path d="M0.2 3H5.6M3.4 0.7L5.8 3L3.4 5.3" fill="none" stroke="#4db88a" stroke-width="1.3"/></svg>
<svg class="r" style="left:348.70px;top:172.42px" width="12.8" height="7.9" viewBox="0 0 12.8 7.9"><path d="M0 0H12.7L7.8 7.9H0Z" fill="#08a6ee"/></svg>
<span class="t" style="left:141px;top:187px;font-size:7.6px;color:#444;transform:translate(0.40px,0) scaleX(0.8541);">ACGL_HEAD-BUDAT</span>
<span class="t" style="left:223px;top:187px;font-size:7.6px;color:#444;transform:translate(0.80px,0) scaleX(0.9355);">Posting Date in the Docum...</span>
<span class="t" style="left:376px;top:187px;font-size:7.6px;color:#444;transform:translate(0.50px,0) scaleX(0.8400);">C</span>
<span class="t" style="left:758px;top:187px;font-size:7.6px;color:#444;transform:translate(0.20px,0) scaleX(0.8126);">CHAR</span>
<svg class="r" style="left:330.90px;top:186.11px" width="10.4" height="8.4" viewBox="0 0 10.4 8.4"><rect x="4.6" y="0.9" width="5.2" height="6.6" fill="#f4faf6" stroke="#2a7a50" stroke-width="0.7"/><path d="M7.5 0.9V7.5M5.8 2.6H9.8M5.8 4.2H9.8M5.8 5.8H9.8" stroke="#2a7a50" stroke-width="0.6"/><path d="M0 0.8L6 0V8.4L0 7.6Z" fill="#1a6a40"/><path d="M1.8 2.6L4.2 5.8M4.2 2.6L1.8 5.8" stroke="#fff" stroke-width="1"/></svg>
<svg class="r" style="left:341.50px;top:187.41px" width="6.4" height="6" viewBox="0 0 6.4 6"><path d="M0.2 3H5.6M3.4 0.7L5.8 3L3.4 5.3" fill="none" stroke="#4db88a" stroke-width="1.3"/></svg>
<svg class="r" style="left:348.70px;top:186.21px" width="12.8" height="7.9" viewBox="0 0 12.8 7.9"><path d="M0 0H12.7L7.8 7.9H0Z" fill="#08a6ee"/></svg>
<span class="t" style="left:141px;top:201px;font-size:7.6px;color:#444;transform:translate(0.40px,0) scaleX(0.8253);">ACGL_HEAD-XBLNR</span>
<span class="t" style="left:223px;top:201px;font-size:7.6px;color:#444;transform:translate(0.80px,0) scaleX(0.9345);">Reference Document Num...</span>
<span class="t" style="left:376px;top:201px;font-size:7.6px;color:#444;transform:translate(0.50px,0) scaleX(0.8400);">D</span>
<span class="t" style="left:758px;top:201px;font-size:7.6px;color:#444;transform:translate(0.20px,0) scaleX(0.8126);">CHAR</span>
<svg class="r" style="left:330.90px;top:199.90px" width="10.4" height="8.4" viewBox="0 0 10.4 8.4"><rect x="4.6" y="0.9" width="5.2" height="6.6" fill="#f4faf6" stroke="#2a7a50" stroke-width="0.7"/><path d="M7.5 0.9V7.5M5.8 2.6H9.8M5.8 4.2H9.8M5.8 5.8H9.8" stroke="#2a7a50" stroke-width="0.6"/><path d="M0 0.8L6 0V8.4L0 7.6Z" fill="#1a6a40"/><path d="M1.8 2.6L4.2 5.8M4.2 2.6L1.8 5.8" stroke="#fff" stroke-width="1"/></svg>
<svg class="r" style="left:341.50px;top:201.20px" width="6.4" height="6" viewBox="0 0 6.4 6"><path d="M0.2 3H5.6M3.4 0.7L5.8 3L3.4 5.3" fill="none" stroke="#4db88a" stroke-width="1.3"/></svg>
<svg class="r" style="left:348.70px;top:200.00px" width="12.8" height="7.9" viewBox="0 0 12.8 7.9"><path d="M0 0H12.7L7.8 7.9H0Z" fill="#08a6ee"/></svg>
<span class="t" style="left:141px;top:215px;font-size:7.6px;color:#444;transform:translate(0.40px,0) scaleX(0.8280);">ACGL_HEAD-BKTXT</span>
<span class="t" style="left:223px;top:215px;font-size:7.6px;color:#444;transform:translate(0.80px,0) scaleX(0.9408);">Document Header Text</span>
<span class="t" style="left:376px;top:215px;font-size:7.6px;color:#444;transform:translate(0.50px,0) scaleX(0.8400);">E</span>
<span class="t" style="left:758px;top:215px;font-size:7.6px;color:#444;transform:translate(0.20px,0) scaleX(0.8126);">CHAR</span>
<svg class="r" style="left:330.90px;top:213.69px" width="10.4" height="8.4" viewBox="0 0 10.4 8.4"><rect x="4.6" y="0.9" width="5.2" height="6.6" fill="#f4faf6" stroke="#2a7a50" stroke-width="0.7"/><path d="M7.5 0.9V7.5M5.8 2.6H9.8M5.8 4.2H9.8M5.8 5.8H9.8" stroke="#2a7a50" stroke-width="0.6"/><path d="M0 0.8L6 0V8.4L0 7.6Z" fill="#1a6a40"/><path d="M1.8 2.6L4.2 5.8M4.2 2.6L1.8 5.8" stroke="#fff" stroke-width="1"/></svg>
<svg class="r" style="left:341.50px;top:214.99px" width="6.4" height="6" viewBox="0 0 6.4 6"><path d="M0.2 3H5.6M3.4 0.7L5.8 3L3.4 5.3" fill="none" stroke="#4db88a" stroke-width="1.3"/></svg>
<svg class="r" style="left:348.70px;top:213.79px" width="12.8" height="7.9" viewBox="0 0 12.8 7.9"><path d="M0 0H12.7L7.8 7.9H0Z" fill="#08a6ee"/></svg>
<span class="t" style="left:478px;top:228px;font-size:7.6px;color:#444;transform:translate(0.60px,0) scaleX(0.9487);">On Value-Ignore Bl...</span>
<span class="t" style="left:551px;top:228px;font-size:7.6px;color:#444;transform:translate(0.50px,0) scaleX(0.8400);">A</span>
<svg class="r" style="left:59px;top:226.78px" width="16" height="10" viewBox="0 0 16 10"><path d="M15.2 1.5H2.2V8" fill="none" stroke="#3070b8" stroke-width="1.5"/><path d="M0.4 6.6L2.2 9.4L4 6.6Z" fill="#3070b8"/></svg>
<span class="t" style="left:80px;top:228px;font-size:7.6px;color:#444;transform:translate(0.50px,0) scaleX(0.9553);">Start Loop</span>
<span class="t" style="left:223px;top:242px;font-size:7.6px;color:#444;transform:translate(0.80px,0) scaleX(0.9252);">Enjoy G/L Account Posting</span>
<span class="t" style="left:693px;top:242px;font-size:7.6px;color:#444;transform:translate(0.70px,0) scaleX(0.9406);">Z-Custom Form...</span>
<span class="t" style="left:758px;top:242px;font-size:7.6px;color:#444;transform:translate(0.20px,0) scaleX(0.8126);">CHAR</span>
<div class="r" style="left:64.3px;top:240.97px;width:12.6px;height:9px;background:#fff;border:0.8px solid #9a9aa8;border-bottom:1.1px solid #8a8a96;border-top:1.8px solid #2f6ab8"></div>
<span class="t" style="left:80px;top:242px;font-size:7.6px;color:#444;transform:translate(0.50px,0) scaleX(0.8563);">SAPMF05A</span>
<span class="t" style="left:117px;top:242px;font-size:7.6px;color:#444;transform:translate(0.90px,0) scaleX(0.9735);">- 1...</span>
<span class="t" style="left:141px;top:256px;font-size:7.6px;color:#444;transform:translate(0.40px,0) scaleX(0.8306);">BDC_OKCODE</span>
<span class="t" style="left:223px;top:256px;font-size:7.6px;color:#444;transform:translate(0.80px,0) scaleX(0.9247);">OK Code for this screen</span>
<span class="t" style="left:376px;top:256px;font-size:7.6px;color:#444;transform:translate(0.50px,0) scaleX(0.9938);">/00</span>
<span class="t" style="left:758px;top:256px;font-size:7.6px;color:#444;transform:translate(0.20px,0) scaleX(0.8126);">CHAR</span>
<svg class="r" style="left:330.60px;top:254.96px" width="8.5" height="8.5" viewBox="0 0 8.5 8.5"><path d="M4.6 0.3L8.2 3.9L7.2 4.3L6.4 3.9L5 5.6L5.2 7L4.4 7.6L2.9 6.1L0.6 8.2L0.3 7.9L2.4 5.6L0.9 4.1L1.5 3.3L2.9 3.5L4.6 2.1L4.2 1.3Z" fill="#8a3fb8"/></svg>
<svg class="r" style="left:341.50px;top:256.36px" width="6.4" height="6" viewBox="0 0 6.4 6"><path d="M0.2 3H5.6M3.4 0.7L5.8 3L3.4 5.3" fill="none" stroke="#4db88a" stroke-width="1.3"/></svg>
<svg class="r" style="left:348.70px;top:255.16px" width="12.8" height="7.9" viewBox="0 0 12.8 7.9"><path d="M0 0H12.7L7.8 7.9H0Z" fill="#08a6ee"/></svg>
<span class="t" style="left:141px;top:270px;font-size:7.6px;color:#444;transform:translate(0.40px,0) scaleX(0.8307);">BDC_CURSOR</span>
<span class="t" style="left:223px;top:270px;font-size:7.6px;color:#444;transform:translate(0.80px,0) scaleX(0.9235);">Cursor location</span>
<span class="t" style="left:376px;top:270px;font-size:7.6px;color:#444;transform:translate(0.50px,0) scaleX(0.8813);">ACGL_ITEM-STATE(02)</span>
<span class="t" style="left:758px;top:270px;font-size:7.6px;color:#444;transform:translate(0.20px,0) scaleX(0.8126);">CHAR</span>
<svg class="r" style="left:330.60px;top:268.75px" width="8.5" height="8.5" viewBox="0 0 8.5 8.5"><path d="M4.6 0.3L8.2 3.9L7.2 4.3L6.4 3.9L5 5.6L5.2 7L4.4 7.6L2.9 6.1L0.6 8.2L0.3 7.9L2.4 5.6L0.9 4.1L1.5 3.3L2.9 3.5L4.6 2.1L4.2 1.3Z" fill="#8a3fb8"/></svg>
<svg class="r" style="left:341.50px;top:270.15px" width="6.4" height="6" viewBox="0 0 6.4 6"><path d="M0.2 3H5.6M3.4 0.7L5.8 3L3.4 5.3" fill="none" stroke="#4db88a" stroke-width="1.3"/></svg>
<svg class="r" style="left:348.70px;top:268.95px" width="12.8" height="7.9" viewBox="0 0 12.8 7.9"><path d="M0 0H12.7L7.8 7.9H0Z" fill="#08a6ee"/></svg>
<span class="t" style="left:141px;top:284px;font-size:7.6px;color:#444;transform:translate(0.40px,0) scaleX(0.8482);">ACGL_HEAD-BLDAT</span>
<span class="t" style="left:223px;top:284px;font-size:7.6px;color:#444;transform:translate(0.80px,0) scaleX(0.9203);">Document Date in Document</span>
<span class="t" style="left:376px;top:284px;font-size:7.6px;color:#444;transform:translate(0.50px,0) scaleX(0.8400);">F</span>
<span class="t" style="left:478px;top:284px;font-size:7.6px;color:#444;transform:translate(0.60px,0) scaleX(0.9484);">Header+Line Item</span>
<span class="t" style="left:758px;top:284px;font-size:7.6px;color:#444;transform:translate(0.20px,0) scaleX(0.8126);">CHAR</span>
<svg class="r" style="left:330.90px;top:282.64px" width="10.4" height="8.4" viewBox="0 0 10.4 8.4"><rect x="4.6" y="0.9" width="5.2" height="6.6" fill="#f4faf6" stroke="#2a7a50" stroke-width="0.7"/><path d="M7.5 0.9V7.5M5.8 2.6H9.8M5.8 4.2H9.8M5.8 5.8H9.8" stroke="#2a7a50" stroke-width="0.6"/><path d="M0 0.8L6 0V8.4L0 7.6Z" fill="#1a6a40"/><path d="M1.8 2.6L4.2 5.8M4.2 2.6L1.8 5.8" stroke="#fff" stroke-width="1"/></svg>
<svg class="r" style="left:341.50px;top:283.94px" width="6.4" height="6" viewBox="0 0 6.4 6"><path d="M0.2 3H5.6M3.4 0.7L5.8 3L3.4 5.3" fill="none" stroke="#4db88a" stroke-width="1.3"/></svg>
<svg class="r" style="left:348.70px;top:282.74px" width="12.8" height="7.9" viewBox="0 0 12.8 7.9"><path d="M0 0H12.7L7.8 7.9H0Z" fill="#08a6ee"/></svg>
<span class="t" style="left:141px;top:297px;font-size:7.6px;color:#444;transform:translate(0.40px,0) scaleX(0.8469);">ACGL_HEAD-WAERS</span>
<span class="t" style="left:223px;top:297px;font-size:7.6px;color:#444;transform:translate(0.80px,0) scaleX(0.9340);">Currency Key</span>
<span class="t" style="left:376px;top:297px;font-size:7.6px;color:#444;transform:translate(0.50px,0) scaleX(0.8400);">G</span>
<span class="t" style="left:478px;top:297px;font-size:7.6px;color:#444;transform:translate(0.60px,0) scaleX(0.9484);">Header+Line Item</span>
<span class="t" style="left:758px;top:297px;font-size:7.6px;color:#444;transform:translate(0.20px,0) scaleX(0.8126);">CHAR</span>
<svg class="r" style="left:330.90px;top:296.43px" width="10.4" height="8.4" viewBox="0 0 10.4 8.4"><rect x="4.6" y="0.9" width="5.2" height="6.6" fill="#f4faf6" stroke="#2a7a50" stroke-width="0.7"/><path d="M7.5 0.9V7.5M5.8 2.6H9.8M5.8 4.2H9.8M5.8 5.8H9.8" stroke="#2a7a50" stroke-width="0.6"/><path d="M0 0.8L6 0V8.4L0 7.6Z" fill="#1a6a40"/><path d="M1.8 2.6L4.2 5.8M4.2 2.6L1.8 5.8" stroke="#fff" stroke-width="1"/></svg>
<svg class="r" style="left:341.50px;top:297.73px" width="6.4" height="6" viewBox="0 0 6.4 6"><path d="M0.2 3H5.6M3.4 0.7L5.8 3L3.4 5.3" fill="none" stroke="#4db88a" stroke-width="1.3"/></svg>
<svg class="r" style="left:348.70px;top:296.53px" width="12.8" height="7.9" viewBox="0 0 12.8 7.9"><path d="M0 0H12.7L7.8 7.9H0Z" fill="#08a6ee"/></svg>
<span class="t" style="left:141px;top:311px;font-size:7.6px;color:#444;transform:translate(0.40px,0) scaleX(0.8541);">ACGL_HEAD-BUDAT</span>
<span class="t" style="left:223px;top:311px;font-size:7.6px;color:#444;transform:translate(0.80px,0) scaleX(0.9355);">Posting Date in the Docum...</span>
<span class="t" style="left:376px;top:311px;font-size:7.6px;color:#444;transform:translate(0.50px,0) scaleX(0.8400);">H</span>
<span class="t" style="left:478px;top:311px;font-size:7.6px;color:#444;transform:translate(0.60px,0) scaleX(0.9484);">Header+Line Item</span>
<span class="t" style="left:758px;top:311px;font-size:7.6px;color:#444;transform:translate(0.20px,0) scaleX(0.8126);">CHAR</span>
<svg class="r" style="left:330.90px;top:310.22px" width="10.4" height="8.4" viewBox="0 0 10.4 8.4"><rect x="4.6" y="0.9" width="5.2" height="6.6" fill="#f4faf6" stroke="#2a7a50" stroke-width="0.7"/><path d="M7.5 0.9V7.5M5.8 2.6H9.8M5.8 4.2H9.8M5.8 5.8H9.8" stroke="#2a7a50" stroke-width="0.6"/><path d="M0 0.8L6 0V8.4L0 7.6Z" fill="#1a6a40"/><path d="M1.8 2.6L4.2 5.8M4.2 2.6L1.8 5.8" stroke="#fff" stroke-width="1"/></svg>
<svg class="r" style="left:341.50px;top:311.52px" width="6.4" height="6" viewBox="0 0 6.4 6"><path d="M0.2 3H5.6M3.4 0.7L5.8 3L3.4 5.3" fill="none" stroke="#4db88a" stroke-width="1.3"/></svg>
<svg class="r" style="left:348.70px;top:310.32px" width="12.8" height="7.9" viewBox="0 0 12.8 7.9"><path d="M0 0H12.7L7.8 7.9H0Z" fill="#08a6ee"/></svg>
<span class="t" style="left:141px;top:325px;font-size:7.6px;color:#444;transform:translate(0.40px,0) scaleX(0.8253);">ACGL_HEAD-XBLNR</span>
<span class="t" style="left:223px;top:325px;font-size:7.6px;color:#444;transform:translate(0.80px,0) scaleX(0.9345);">Reference Document Num...</span>
<span class="t" style="left:376px;top:325px;font-size:7.6px;color:#444;transform:translate(0.50px,0) scaleX(0.8400);">I</span>
<span class="t" style="left:478px;top:325px;font-size:7.6px;color:#444;transform:translate(0.60px,0) scaleX(0.9484);">Header+Line Item</span>
<span class="t" style="left:758px;top:325px;font-size:7.6px;color:#444;transform:translate(0.20px,0) scaleX(0.8126);">CHAR</span>
<svg class="r" style="left:330.90px;top:324.01px" width="10.4" height="8.4" viewBox="0 0 10.4 8.4"><rect x="4.6" y="0.9" width="5.2" height="6.6" fill="#f4faf6" stroke="#2a7a50" stroke-width="0.7"/><path d="M7.5 0.9V7.5M5.8 2.6H9.8M5.8 4.2H9.8M5.8 5.8H9.8" stroke="#2a7a50" stroke-width="0.6"/><path d="M0 0.8L6 0V8.4L0 7.6Z" fill="#1a6a40"/><path d="M1.8 2.6L4.2 5.8M4.2 2.6L1.8 5.8" stroke="#fff" stroke-width="1"/></svg>
<svg class="r" style="left:341.50px;top:325.31px" width="6.4" height="6" viewBox="0 0 6.4 6"><path d="M0.2 3H5.6M3.4 0.7L5.8 3L3.4 5.3" fill="none" stroke="#4db88a" stroke-width="1.3"/></svg>
<svg class="r" style="left:348.70px;top:324.11px" width="12.8" height="7.9" viewBox="0 0 12.8 7.9"><path d="M0 0H12.7L7.8 7.9H0Z" fill="#08a6ee"/></svg>
<span class="t" style="left:141px;top:339px;font-size:7.6px;color:#444;transform:translate(0.40px,0) scaleX(0.8280);">ACGL_HEAD-BKTXT</span>
<span class="t" style="left:223px;top:339px;font-size:7.6px;color:#444;transform:translate(0.80px,0) scaleX(0.9408);">Document Header Text</span>
<span class="t" style="left:376px;top:339px;font-size:7.6px;color:#444;transform:translate(0.50px,0) scaleX(0.8400);">J</span>
<span class="t" style="left:478px;top:339px;font-size:7.6px;color:#444;transform:translate(0.60px,0) scaleX(0.9484);">Header+Line Item</span>
<span class="t" style="left:758px;top:339px;font-size:7.6px;color:#444;transform:translate(0.20px,0) scaleX(0.8126);">CHAR</span>
<svg class="r" style="left:330.90px;top:337.80px" width="10.4" height="8.4" viewBox="0 0 10.4 8.4"><rect x="4.6" y="0.9" width="5.2" height="6.6" fill="#f4faf6" stroke="#2a7a50" stroke-width="0.7"/><path d="M7.5 0.9V7.5M5.8 2.6H9.8M5.8 4.2H9.8M5.8 5.8H9.8" stroke="#2a7a50" stroke-width="0.6"/><path d="M0 0.8L6 0V8.4L0 7.6Z" fill="#1a6a40"/><path d="M1.8 2.6L4.2 5.8M4.2 2.6L1.8 5.8" stroke="#fff" stroke-width="1"/></svg>
<svg class="r" style="left:341.50px;top:339.10px" width="6.4" height="6" viewBox="0 0 6.4 6"><path d="M0.2 3H5.6M3.4 0.7L5.8 3L3.4 5.3" fill="none" stroke="#4db88a" stroke-width="1.3"/></svg>
<svg class="r" style="left:348.70px;top:337.90px" width="12.8" height="7.9" viewBox="0 0 12.8 7.9"><path d="M0 0H12.7L7.8 7.9H0Z" fill="#08a6ee"/></svg>
<span class="t" style="left:223px;top:352px;font-size:7.6px;color:#444;transform:translate(0.80px,0) scaleX(0.9252);">Enjoy G/L Account Posting</span>
<span class="t" style="left:758px;top:352px;font-size:7.6px;color:#444;transform:translate(0.20px,0) scaleX(0.8126);">CHAR</span>
<div class="r" style="left:64.3px;top:351.29px;width:12.6px;height:9px;background:#fff;border:0.8px solid #9a9aa8;border-bottom:1.1px solid #8a8a96;border-top:1.8px solid #2f6ab8"></div>
<span class="t" style="left:80px;top:352px;font-size:7.6px;color:#444;transform:translate(0.50px,0) scaleX(0.8563);">SAPMF05A</span>
<span class="t" style="left:117px;top:352px;font-size:7.6px;color:#444;transform:translate(0.90px,0) scaleX(0.9735);">- 1...</span>
<span class="t" style="left:141px;top:366px;font-size:7.6px;color:#444;transform:translate(0.40px,0) scaleX(0.8306);">BDC_OKCODE</span>
<span class="t" style="left:223px;top:366px;font-size:7.6px;color:#444;transform:translate(0.80px,0) scaleX(0.9247);">OK Code for this screen</span>
<span class="t" style="left:376px;top:366px;font-size:7.6px;color:#444;transform:translate(0.50px,0) scaleX(1.0072);">=0005</span>
<span class="t" style="left:758px;top:366px;font-size:7.6px;color:#444;transform:translate(0.20px,0) scaleX(0.8126);">CHAR</span>
<svg class="r" style="left:330.60px;top:365.28px" width="8.5" height="8.5" viewBox="0 0 8.5 8.5"><path d="M4.6 0.3L8.2 3.9L7.2 4.3L6.4 3.9L5 5.6L5.2 7L4.4 7.6L2.9 6.1L0.6 8.2L0.3 7.9L2.4 5.6L0.9 4.1L1.5 3.3L2.9 3.5L4.6 2.1L4.2 1.3Z" fill="#8a3fb8"/></svg>
<svg class="r" style="left:341.50px;top:366.68px" width="6.4" height="6" viewBox="0 0 6.4 6"><path d="M0.2 3H5.6M3.4 0.7L5.8 3L3.4 5.3" fill="none" stroke="#4db88a" stroke-width="1.3"/></svg>
<svg class="r" style="left:348.70px;top:365.48px" width="12.8" height="7.9" viewBox="0 0 12.8 7.9"><path d="M0 0H12.7L7.8 7.9H0Z" fill="#08a6ee"/></svg>
<span class="t" style="left:141px;top:380px;font-size:7.6px;color:#444;transform:translate(0.40px,0) scaleX(0.8307);">BDC_CURSOR</span>
<span class="t" style="left:223px;top:380px;font-size:7.6px;color:#444;transform:translate(0.80px,0) scaleX(0.9235);">Cursor location</span>
<span class="t" style="left:376px;top:380px;font-size:7.6px;color:#444;transform:translate(0.50px,0) scaleX(0.8813);">ACGL_ITEM-STATE(02)</span>
<span class="t" style="left:758px;top:380px;font-size:7.6px;color:#444;transform:translate(0.20px,0) scaleX(0.8126);">CHAR</span>
<svg class="r" style="left:330.60px;top:379.07px" width="8.5" height="8.5" viewBox="0 0 8.5 8.5"><path d="M4.6 0.3L8.2 3.9L7.2 4.3L6.4 3.9L5 5.6L5.2 7L4.4 7.6L2.9 6.1L0.6 8.2L0.3 7.9L2.4 5.6L0.9 4.1L1.5 3.3L2.9 3.5L4.6 2.1L4.2 1.3Z" fill="#8a3fb8"/></svg>
<svg class="r" style="left:341.50px;top:380.47px" width="6.4" height="6" viewBox="0 0 6.4 6"><path d="M0.2 3H5.6M3.4 0.7L5.8 3L3.4 5.3" fill="none" stroke="#4db88a" stroke-width="1.3"/></svg>
<svg class="r" style="left:348.70px;top:379.27px" width="12.8" height="7.9" viewBox="0 0 12.8 7.9"><path d="M0 0H12.7L7.8 7.9H0Z" fill="#08a6ee"/></svg>
<span class="t" style="left:141px;top:394px;font-size:7.6px;color:#444;transform:translate(0.40px,0) scaleX(0.8721);">ACGL_ITEM-MARKSP(...</span>
<span class="t" style="left:223px;top:394px;font-size:7.6px;color:#444;transform:translate(0.80px,0) scaleX(0.8605);">ACGL_ITEM-MARKSP(01)</span>
<span class="t" style="left:376px;top:394px;font-size:7.6px;color:#444;transform:translate(0.50px,0) scaleX(0.8400);">X</span>
<span class="t" style="left:758px;top:394px;font-size:7.6px;color:#444;transform:translate(0.20px,0) scaleX(0.8126);">CHAR</span>
<svg class="r" style="left:330.60px;top:392.86px" width="8.5" height="8.5" viewBox="0 0 8.5 8.5"><path d="M4.6 0.3L8.2 3.9L7.2 4.3L6.4 3.9L5 5.6L5.2 7L4.4 7.6L2.9 6.1L0.6 8.2L0.3 7.9L2.4 5.6L0.9 4.1L1.5 3.3L2.9 3.5L4.6 2.1L4.2 1.3Z" fill="#8a3fb8"/></svg>
<svg class="r" style="left:341.50px;top:394.26px" width="6.4" height="6" viewBox="0 0 6.4 6"><path d="M0.2 3H5.6M3.4 0.7L5.8 3L3.4 5.3" fill="none" stroke="#4db88a" stroke-width="1.3"/></svg>
<svg class="r" style="left:348.70px;top:393.06px" width="12.8" height="7.9" viewBox="0 0 12.8 7.9"><path d="M0 0H12.7L7.8 7.9H0Z" fill="#08a6ee"/></svg>
<span class="t" style="left:223px;top:408px;font-size:7.6px;color:#444;transform:translate(0.80px,0) scaleX(0.9252);">Enjoy G/L Account Posting</span>
<span class="t" style="left:758px;top:408px;font-size:7.6px;color:#444;transform:translate(0.20px,0) scaleX(0.8126);">CHAR</span>
<div class="r" style="left:64.3px;top:406.45px;width:12.6px;height:9px;background:#fff;border:0.8px solid #9a9aa8;border-bottom:1.1px solid #8a8a96;border-top:1.8px solid #2f6ab8"></div>
<span class="t" style="left:80px;top:408px;font-size:7.6px;color:#444;transform:translate(0.50px,0) scaleX(0.8563);">SAPMF05A</span>
<span class="t" style="left:117px;top:408px;font-size:7.6px;color:#444;transform:translate(0.90px,0) scaleX(0.9735);">- 1...</span>
<span class="t" style="left:141px;top:421px;font-size:7.6px;color:#444;transform:translate(0.40px,0) scaleX(0.8306);">BDC_OKCODE</span>
<span class="t" style="left:223px;top:421px;font-size:7.6px;color:#444;transform:translate(0.80px,0) scaleX(0.9247);">OK Code for this screen</span>
<span class="t" style="left:376px;top:421px;font-size:7.6px;color:#444;transform:translate(0.50px,0) scaleX(1.0072);">=0005</span>
<span class="t" style="left:758px;top:421px;font-size:7.6px;color:#444;transform:translate(0.20px,0) scaleX(0.8126);">CHAR</span>
<svg class="r" style="left:330.60px;top:420.44px" width="8.5" height="8.5" viewBox="0 0 8.5 8.5"><path d="M4.6 0.3L8.2 3.9L7.2 4.3L6.4 3.9L5 5.6L5.2 7L4.4 7.6L2.9 6.1L0.6 8.2L0.3 7.9L2.4 5.6L0.9 4.1L1.5 3.3L2.9 3.5L4.6 2.1L4.2 1.3Z" fill="#8a3fb8"/></svg>
<svg class="r" style="left:341.50px;top:421.84px" width="6.4" height="6" viewBox="0 0 6.4 6"><path d="M0.2 3H5.6M3.4 0.7L5.8 3L3.4 5.3" fill="none" stroke="#4db88a" stroke-width="1.3"/></svg>
<svg class="r" style="left:348.70px;top:420.64px" width="12.8" height="7.9" viewBox="0 0 12.8 7.9"><path d="M0 0H12.7L7.8 7.9H0Z" fill="#08a6ee"/></svg>
<span class="t" style="left:141px;top:435px;font-size:7.6px;color:#444;transform:translate(0.40px,0) scaleX(0.8307);">BDC_CURSOR</span>
<span class="t" style="left:223px;top:435px;font-size:7.6px;color:#444;transform:translate(0.80px,0) scaleX(0.9235);">Cursor location</span>
<span class="t" style="left:376px;top:435px;font-size:7.6px;color:#444;transform:translate(0.50px,0) scaleX(0.8813);">ACGL_ITEM-STATE(02)</span>
<span class="t" style="left:758px;top:435px;font-size:7.6px;color:#444;transform:translate(0.20px,0) scaleX(0.8126);">CHAR</span>
<svg class="r" style="left:330.60px;top:434.23px" width="8.5" height="8.5" viewBox="0 0 8.5 8.5"><path d="M4.6 0.3L8.2 3.9L7.2 4.3L6.4 3.9L5 5.6L5.2 7L4.4 7.6L2.9 6.1L0.6 8.2L0.3 7.9L2.4 5.6L0.9 4.1L1.5 3.3L2.9 3.5L4.6 2.1L4.2 1.3Z" fill="#8a3fb8"/></svg>
<svg class="r" style="left:341.50px;top:435.63px" width="6.4" height="6" viewBox="0 0 6.4 6"><path d="M0.2 3H5.6M3.4 0.7L5.8 3L3.4 5.3" fill="none" stroke="#4db88a" stroke-width="1.3"/></svg>
<svg class="r" style="left:348.70px;top:434.43px" width="12.8" height="7.9" viewBox="0 0 12.8 7.9"><path d="M0 0H12.7L7.8 7.9H0Z" fill="#08a6ee"/></svg>
<span class="t" style="left:141px;top:449px;font-size:7.6px;color:#444;transform:translate(0.40px,0) scaleX(0.8721);">ACGL_ITEM-MARKSP(...</span>
<span class="t" style="left:223px;top:449px;font-size:7.6px;color:#444;transform:translate(0.80px,0) scaleX(0.8605);">ACGL_ITEM-MARKSP(01)</span>
<span class="t" style="left:376px;top:449px;font-size:7.6px;color:#444;transform:translate(0.50px,0) scaleX(0.8400);">X</span>
<span class="t" style="left:758px;top:449px;font-size:7.6px;color:#444;transform:translate(0.20px,0) scaleX(0.8126);">CHAR</span>
<svg class="r" style="left:330.60px;top:448.02px" width="8.5" height="8.5" viewBox="0 0 8.5 8.5"><path d="M4.6 0.3L8.2 3.9L7.2 4.3L6.4 3.9L5 5.6L5.2 7L4.4 7.6L2.9 6.1L0.6 8.2L0.3 7.9L2.4 5.6L0.9 4.1L1.5 3.3L2.9 3.5L4.6 2.1L4.2 1.3Z" fill="#8a3fb8"/></svg>
<svg class="r" style="left:341.50px;top:449.42px" width="6.4" height="6" viewBox="0 0 6.4 6"><path d="M0.2 3H5.6M3.4 0.7L5.8 3L3.4 5.3" fill="none" stroke="#4db88a" stroke-width="1.3"/></svg>
<svg class="r" style="left:348.70px;top:448.22px" width="12.8" height="7.9" viewBox="0 0 12.8 7.9"><path d="M0 0H12.7L7.8 7.9H0Z" fill="#08a6ee"/></svg>
<svg class="r" style="left:59px;top:461.21px" width="16" height="10" viewBox="0 0 16 10"><path d="M15.2 8.5H2.2V2" fill="none" stroke="#3070b8" stroke-width="1.5"/><path d="M0.4 3.6L2.2 0.8L4 3.6Z" fill="#3070b8"/></svg>
<span class="t" style="left:80px;top:463px;font-size:7.6px;color:#444;transform:translate(0.60px,0) scaleX(0.8850);">End Loop</span>
<span class="t" style="left:223px;top:477px;font-size:7.6px;color:#444;transform:translate(0.80px,0) scaleX(0.9252);">Enjoy G/L Account Posting</span>
<span class="t" style="left:758px;top:477px;font-size:7.6px;color:#444;transform:translate(0.20px,0) scaleX(0.8126);">CHAR</span>
<div class="r" style="left:64.3px;top:475.40px;width:12.6px;height:9px;background:#fff;border:0.8px solid #9a9aa8;border-bottom:1.1px solid #8a8a96;border-top:1.8px solid #2f6ab8"></div>
<span class="t" style="left:80px;top:477px;font-size:7.6px;color:#444;transform:translate(0.50px,0) scaleX(0.8563);">SAPMF05A</span>
<span class="t" style="left:117px;top:477px;font-size:7.6px;color:#444;transform:translate(0.90px,0) scaleX(0.9735);">- 1...</span>
<span class="t" style="left:141px;top:490px;font-size:7.6px;color:#444;transform:translate(0.40px,0) scaleX(0.8306);">BDC_OKCODE</span>
<span class="t" style="left:223px;top:490px;font-size:7.6px;color:#444;transform:translate(0.80px,0) scaleX(0.9247);">OK Code for this screen</span>
<span class="t" style="left:376px;top:490px;font-size:7.6px;color:#444;transform:translate(0.50px,0) scaleX(0.8400);">L</span>
<span class="t" style="left:693px;top:490px;font-size:7.6px;color:#444;transform:translate(0.70px,0) scaleX(0.9406);">Z-Custom Form...</span>
<span class="t" style="left:758px;top:490px;font-size:7.6px;color:#444;transform:translate(0.20px,0) scaleX(0.8126);">CHAR</span>
<svg class="r" style="left:330.90px;top:489.49px" width="10.4" height="8.4" viewBox="0 0 10.4 8.4"><rect x="4.6" y="0.9" width="5.2" height="6.6" fill="#f4faf6" stroke="#2a7a50" stroke-width="0.7"/><path d="M7.5 0.9V7.5M5.8 2.6H9.8M5.8 4.2H9.8M5.8 5.8H9.8" stroke="#2a7a50" stroke-width="0.6"/><path d="M0 0.8L6 0V8.4L0 7.6Z" fill="#1a6a40"/><path d="M1.8 2.6L4.2 5.8M4.2 2.6L1.8 5.8" stroke="#fff" stroke-width="1"/></svg>
<svg class="r" style="left:341.50px;top:490.79px" width="6.4" height="6" viewBox="0 0 6.4 6"><path d="M0.2 3H5.6M3.4 0.7L5.8 3L3.4 5.3" fill="none" stroke="#4db88a" stroke-width="1.3"/></svg>
<svg class="r" style="left:348.70px;top:489.59px" width="12.8" height="7.9" viewBox="0 0 12.8 7.9"><path d="M0 0H12.7L7.8 7.9H0Z" fill="#08a6ee"/></svg>
<div class="r" style="left:55px;top:113.8px;width:83.5px;height:13.8px;background:#fff;border:1px dashed #a4a4a4"></div>
<div class="r" style="left:127.6px;top:114.4px;width:10.6px;height:12.8px;background:#ebebeb;border:0.8px solid #c4c4c4"></div>
<svg class="r" style="left:130.4px;top:119.2px" width="5" height="3.6" viewBox="0 0 5 3.6"><path d="M0.4 0.5L2.5 2.9L4.6 0.5" fill="none" stroke="#555" stroke-width="0.9"/></svg>
<div class="r" style="left:22.2px;top:224.38px;width:801.8px;height:14.69px;border:1.5px solid #f0141e"></div>
<div class="r" style="left:22.2px;top:458.81px;width:801.8px;height:14.69px;border:1.5px solid #f0141e"></div>
<div class="r" style="left:823.70px;top:113.60px;width:11.30px;height:385.70px;background:#f0f0f0;"></div>
<div class="r" style="left:823.70px;top:100.00px;width:11.30px;height:13.60px;background:#f4f4f4;"></div>
<div class="r" style="left:824.40px;top:132.50px;width:10.40px;height:176.50px;background:#c6c6c6;"></div>
<svg class="r" style="left:827px;top:118px" width="5.4" height="3.6" viewBox="0 0 5.4 3.6"><path d="M0.4 3.1L2.7 0.6L5 3.1" fill="none" stroke="#5c5c5c" stroke-width="1.3"/></svg>
<svg class="r" style="left:827px;top:491.6px" width="5.4" height="3.6" viewBox="0 0 5.4 3.6"><path d="M0.4 0.5L2.7 3L5 0.5" fill="none" stroke="#5c5c5c" stroke-width="1.3"/></svg>
<svg class="r" style="left:826.8px;top:86.6px" width="5.4" height="3.6" viewBox="0 0 5.4 3.6"><path d="M0.4 3.1L2.7 0.6L5 3.1" fill="none" stroke="#5c5c5c" stroke-width="1.3"/></svg>
<div class="r" style="left:3.5px;top:99.5px;width:832px;height:400.3px;border:1px solid #c4c4c4"></div>
<svg class="r" style="left:0;top:0" width="840" height="503" viewBox="0 0 840 503"><path d="M90.2 158.4H173.9V192.6H117.9L96.5 224.2L106.8 192.6H90.2Z" fill="#1cb8f0" stroke="#1674ae" stroke-width="1" stroke-linejoin="miter"/></svg>
<span class="t" style="left:97px;top:167px;font-size:8px;color:#fff;font-weight:bold;transform:translate(0.60px,0) scaleX(1.0379);">Start Loop will</span>
<span class="t" style="left:97px;top:178px;font-size:8px;color:#fff;font-weight:bold;transform:translate(0.60px,0) scaleX(1.0857);">be inserted here</span>
<svg class="r" style="left:0;top:0" width="840" height="503" viewBox="0 0 840 503"><path d="M469.5 160.2H592.8V194.7H569.5L578.1 224.3L555.8 194.7H523.5L504.7 224.3L514 194.7H469.5Z" fill="#1cb8f0" stroke="#1674ae" stroke-width="1" stroke-linejoin="miter"/></svg>
<span class="t" style="left:477px;top:168px;font-size:8px;color:#fff;font-weight:bold;transform:translate(0.20px,0) scaleX(1.0425);">&#x27;Block Type&#x27; and &#x27;Block</span>
<span class="t" style="left:477px;top:179px;font-size:8px;color:#fff;font-weight:bold;transform:translate(0.20px,0) scaleX(1.0765);">Value&#x27; is set automatically</span>
<svg class="r" style="left:0;top:0" width="840" height="503" viewBox="0 0 840 503"><path d="M85.8 384.1H194.7V419.1H120.2L90.4 459L108 419.1H85.8Z" fill="#1cb8f0" stroke="#1674ae" stroke-width="1" stroke-linejoin="miter"/></svg>
<span class="t" style="left:93px;top:393px;font-size:8px;color:#fff;font-weight:bold;transform:translate(0.70px,0) scaleX(1.0338);">End Loop will be</span>
<span class="t" style="left:93px;top:404px;font-size:8px;color:#fff;font-weight:bold;transform:translate(0.70px,0) scaleX(1.0772);">inserted automatically</span>
<svg class="r" style="left:0;top:0" width="840" height="503" viewBox="0 0 840 503"><path d="M5.4 15.6L11.9 15.6L11.9 10.8L10 12.4L6.6 13.9Z" fill="#2b5fa8"/><path d="M7.4 14.6L11 14.6L11 12.6Z" fill="#5a9ad8"/><path d="M9.7 4.9C8.3 6.6 6.9 10.4 6.8 13.7L9.4 13L10.6 11C10.7 8.5 10.5 6.4 9.7 4.9Z" fill="#7ab828"/><path d="M22.4 6.3H27.8L30.3 8.8V15.3H22.4Z" fill="#fff" stroke="#666" stroke-width="0.8"/><path d="M27.8 6.3V8.8H30.3" fill="none" stroke="#666" stroke-width="0.6"/><path d="M26.9 8.8C26 9.8 25.3 11.6 25.2 13.2L26.8 12.8L27.4 11.6C27.5 10.4 27.3 9.5 26.9 8.8Z" fill="#7ab828"/><path d="M24.8 14.2L27.8 14.2V12L25.4 13.4Z" fill="#2b5fa8"/><rect x="21" y="5" width="2.4" height="2.4" fill="#f8c0a8"/><rect x="40.2" y="6.2" width="9.6" height="9.1" rx="0.8" fill="#8e44ad"/><rect x="42.2" y="7.1000000000000005" width="5.6" height="2.8" fill="#f4f0f8"/><rect x="43.2" y="7.800000000000001" width="3.6" height="1.2" fill="#bbb"/><rect x="41.800000000000004" y="12.0" width="6.4" height="3.3" fill="#f4f0f8"/><rect x="45.800000000000004" y="12.5" width="1.3" height="2.2" fill="#8e44ad"/><rect x="58.3" y="6.2" width="9.6" height="9.1" rx="0.8" fill="#8e44ad"/><rect x="60.3" y="7.1000000000000005" width="5.6" height="2.8" fill="#f4f0f8"/><rect x="61.3" y="7.800000000000001" width="3.6" height="1.2" fill="#bbb"/><rect x="59.9" y="12.0" width="6.4" height="3.3" fill="#f4f0f8"/><rect x="63.9" y="12.5" width="1.3" height="2.2" fill="#8e44ad"/><path d="M63.3 11.6V14.4A2.55 1 0 0 0 68.4 14.4V11.6Z" fill="#f0a848"/><ellipse cx="65.85" cy="11.6" rx="2.55" ry="1" fill="#f8c880" stroke="#e09030" stroke-width="0.4"/><path d="M77.6 5.8H82L84.3 8.1V14.7H77.6Z" fill="#fff" stroke="#666" stroke-width="0.8"/><path d="M80.6 8.2C79.8 9.2 79.2 10.8 79.1 12.6L80.5 12.2L81 11C81.1 9.8 81 9 80.6 8.2Z" fill="#7ab828"/><path d="M78.6 13.8L81.2 13.8V11.8L79.2 13Z" fill="#2b5fa8"/><circle cx="83.8" cy="12.4" r="3.1" fill="#e04a3a"/><path d="M82.5 11.1L85.1 13.7M85.1 11.1L82.5 13.7" stroke="#fff" stroke-width="0.9"/><circle cx="99.8" cy="10.5" r="5.3" fill="#3b78c0"/><path d="M98 7.7L103 10.5L98 13.3Z" fill="#fff"/><circle cx="127.9" cy="10.5" r="5.2" fill="#9a9a9a"/><rect x="126" y="8.6" width="3.8" height="3.8" fill="#cfcfcf"/><rect x="141.4" y="6.5" width="10.4" height="8.9" fill="#fdfdfd" stroke="#777" stroke-width="0.8"/><rect x="141.2" y="6.2" width="6" height="2.1" fill="#2f6fc0"/><rect x="147.2" y="6.2" width="4.8" height="2.1" fill="#aaa"/><rect x="172.6" y="8" width="3.4" height="0.8" fill="#666"/><path d="M172.4 9.8H176.2L174.3 12Z" fill="#666"/><rect x="763.2" y="6.5" width="8" height="7.8" fill="#f2f2f2" stroke="#888" stroke-width="0.8"/><path d="M764.8 8.2H769.6M767.2 9.4V12.8M765.6 10.8L767.2 9.3L768.8 10.8" fill="none" stroke="#888" stroke-width="0.7"/><rect x="784" y="10.8" width="5.6" height="1.2" fill="#555"/><rect x="803.4" y="7.8" width="6.2" height="5.4" fill="none" stroke="#606060" stroke-width="0.8"/><rect x="803" y="7.3" width="7" height="1.5" fill="#606060"/><path d="M823.2 7.4L829.2 13.4M829.2 7.4L823.2 13.4" stroke="#555" stroke-width="1.3"/><circle cx="830" cy="27.5" r="5.2" fill="#2f6fc0"/></svg>
<span class="t" style="left:745px;top:6px;font-size:8.6px;color:#3a3a3a;font-weight:bold;transform:translate(0.20px,0) scaleX(0.8566);">?</span>
<span class="t" style="left:827px;top:24px;font-size:8.6px;color:#fff;font-weight:bold;transform:translate(0.50px,0) scaleX(0.8376);">?</span>
<svg class="r" style="left:0;top:0" width="840" height="503" viewBox="0 0 840 503"><circle cx="16.8" cy="49.9" r="10" fill="#3b78c0"/><path d="M13.6 44.6L23.2 49.9L13.6 55.2Z" fill="#fff"/><circle cx="41.3" cy="44.7" r="5.2" fill="#9a9a9a"/><rect x="39.5" y="42.9" width="3.6" height="3.6" fill="#d4d4d4"/><circle cx="41.3" cy="59.5" r="5.2" fill="#3fae7c"/><path d="M39.6 56.8L44 59.5L39.6 62.2Z" fill="#fff"/><circle cx="44" cy="62" r="2" fill="#e8f2fb" stroke="#2f6fc0" stroke-width="0.8"/><path d="M45.4 63.4L46.8 64.9" stroke="#2f6fc0" stroke-width="1"/><circle cx="41.3" cy="74.8" r="5.2" fill="#d4452f"/><path d="M39.6 72.1L44 74.8L39.6 77.5Z" fill="#fff"/><path d="M41.2 77.2L43.2 79.2L46.8 74.6" fill="none" stroke="#2a9a50" stroke-width="1.4"/><rect x="109.8" y="42.3" width="14" height="14.8" rx="1" fill="#eab050"/><rect x="113.8" y="40.8" width="6" height="2.8" rx="0.8" fill="#888"/><path d="M118.2 47.4H124.6L127.6 50.4V59.4H118.2Z" fill="#fff" stroke="#666" stroke-width="0.8"/><path d="M120.2 51.6H124.6M120.2 53.6H125.6M120.2 55.6H125.6M120.2 57.4H125.6" stroke="#4a8ad0" stroke-width="0.8"/><path d="M140 40.2L145.2 48.2M146.6 40.2L141.4 48.2" stroke="#505860" stroke-width="1.3"/><circle cx="140.8" cy="48.6" r="1.7" fill="none" stroke="#2f6fc0" stroke-width="1.2"/><circle cx="145.8" cy="48.6" r="1.7" fill="none" stroke="#2f6fc0" stroke-width="1.2"/><path d="M138.2 54.6H141.8L143.6 56.4V62H138.2Z" fill="#f4f7fb" stroke="#9aa8b8" stroke-width="0.7"/><path d="M142.6 57.4H146.6L148.6 59.4V64.4H142.6Z" fill="#f4f7fb" stroke="#9aa8b8" stroke-width="0.7"/><rect x="143.8" y="61" width="3.6" height="2.4" fill="#8fb4e0"/><circle cx="143.3" cy="74.8" r="5.2" fill="#d4452f"/><rect x="140.3" y="73.9" width="6" height="1.8" fill="#fff"/><rect x="162.3" y="40.6" width="13" height="15" fill="#fff" stroke="#777" stroke-width="0.8"/><rect x="162" y="40.2" width="13.6" height="1.6" fill="#2f6fc0"/><path d="M165 43.6V53.6M167.2 43.6V53.6" stroke="#999" stroke-width="0.6" stroke-dasharray="1 0.8"/><rect x="169.3" y="44.6" width="12.4" height="14.6" fill="#fff" stroke="#777" stroke-width="0.8"/><rect x="169" y="44.2" width="13" height="1.8" fill="#d4452f"/><rect x="171.2" y="47.4" width="8.6" height="10" fill="#f2b0a4"/><path d="M171.2 49.6H179.8M171.2 52H179.8M171.2 54.4H179.8M175.5 47.4V57.4" stroke="#e88070" stroke-width="0.7"/><rect x="199.2" y="41.4" width="20.4" height="16.4" fill="#fff" stroke="#8a8a8a" stroke-width="0.8"/><rect x="198.89999999999998" y="41.1" width="21.0" height="3.4" fill="#2f6fc0"/><path d="M204.29999999999998 44.4V57.8" stroke="#8a8a8a" stroke-width="0.7"/><path d="M209.39999999999998 44.4V57.8" stroke="#8a8a8a" stroke-width="0.7"/><path d="M214.5 44.4V57.8" stroke="#8a8a8a" stroke-width="0.7"/><path d="M199.2 47.825H219.6" stroke="#9a9a9a" stroke-width="0.6"/><path d="M199.2 51.15H219.6" stroke="#9a9a9a" stroke-width="0.6"/><path d="M199.2 54.475H219.6" stroke="#9a9a9a" stroke-width="0.6"/><rect x="204.045" y="41.1" width="5.61" height="16.7" fill="#bcdcf4" stroke="#6aa0d8" stroke-width="0.6"/><circle cx="236.3" cy="49.9" r="5.2" fill="#3fae7c"/><path d="M233.6 50L235.6 52.1L239.2 47.8" fill="none" stroke="#fff" stroke-width="1.3"/><circle cx="236.3" cy="69.6" r="5.2" fill="#707070"/><path d="M233.4 69.6L235.4 71.7L239 67.4" fill="none" stroke="#ddd" stroke-width="1.2"/><path d="M237.6 70.4L241.4 74.2M241.4 70.4L237.6 74.2" stroke="#e0281e" stroke-width="1.3"/><rect x="322.5" y="41.4" width="19" height="16.2" fill="#fff" stroke="#8a8a8a" stroke-width="0.8"/><rect x="322.2" y="41.1" width="19.6" height="3.4" fill="#2f6fc0"/><path d="M327.25 44.4V57.599999999999994" stroke="#8a8a8a" stroke-width="0.7"/><path d="M332.0 44.4V57.599999999999994" stroke="#8a8a8a" stroke-width="0.7"/><path d="M336.75 44.4V57.599999999999994" stroke="#8a8a8a" stroke-width="0.7"/><path d="M322.5 47.775H341.5" stroke="#9a9a9a" stroke-width="0.6"/><path d="M322.5 51.05H341.5" stroke="#9a9a9a" stroke-width="0.6"/><path d="M322.5 54.325H341.5" stroke="#9a9a9a" stroke-width="0.6"/><rect x="327.0125" y="41.1" width="5.2250000000000005" height="16.5" fill="#bcdcf4" stroke="#6aa0d8" stroke-width="0.6"/><circle cx="338.4" cy="55.4" r="4.5" fill="#3fae7c"/><path d="M335.8 55.4H341M338.4 52.8V58" stroke="#fff" stroke-width="1.2"/><rect x="362.2" y="41.4" width="19.6" height="16.2" fill="#fff" stroke="#8a8a8a" stroke-width="0.8"/><rect x="361.9" y="41.1" width="20.200000000000003" height="3.4" fill="#2f6fc0"/><path d="M367.09999999999997 44.4V57.599999999999994" stroke="#8a8a8a" stroke-width="0.7"/><path d="M372.0 44.4V57.599999999999994" stroke="#8a8a8a" stroke-width="0.7"/><path d="M376.9 44.4V57.599999999999994" stroke="#8a8a8a" stroke-width="0.7"/><path d="M362.2 47.775H381.8" stroke="#9a9a9a" stroke-width="0.6"/><path d="M362.2 51.05H381.8" stroke="#9a9a9a" stroke-width="0.6"/><path d="M362.2 54.325H381.8" stroke="#9a9a9a" stroke-width="0.6"/><rect x="369.305" y="44.6" width="6.125" height="13.0" fill="#bcdcf4" stroke="#6aa0d8" stroke-width="0.6"/><circle cx="377.6" cy="55.4" r="4.5" fill="#2f6fc0"/><rect x="377" y="54.6" width="1.3" height="3.4" fill="#fff"/><circle cx="377.65" cy="53" r="0.8" fill="#fff"/><path d="M405.8 44.3H423.6" stroke="#0b3fb0" stroke-width="2.7"/><path d="M418.6 39.6L425.2 44.3L418.6 49.2" fill="none" stroke="#0b3fb0" stroke-width="3"/><path d="M425.6 55H407.8" stroke="#0e9a50" stroke-width="2.7"/><path d="M412.8 50.2L406.2 55L412.8 60" fill="none" stroke="#0e9a50" stroke-width="3"/><rect x="457.2" y="41.4" width="19.6" height="16.2" fill="#fff" stroke="#8a8a8a" stroke-width="0.8"/><rect x="456.9" y="41.1" width="20.200000000000003" height="3.4" fill="#2f6fc0"/><path d="M462.09999999999997 44.4V57.599999999999994" stroke="#8a8a8a" stroke-width="0.7"/><path d="M467.0 44.4V57.599999999999994" stroke="#8a8a8a" stroke-width="0.7"/><path d="M471.9 44.4V57.599999999999994" stroke="#8a8a8a" stroke-width="0.7"/><path d="M457.2 47.775H476.8" stroke="#9a9a9a" stroke-width="0.6"/><path d="M457.2 51.05H476.8" stroke="#9a9a9a" stroke-width="0.6"/><path d="M457.2 54.325H476.8" stroke="#9a9a9a" stroke-width="0.6"/><rect x="464" y="46.8" width="12.6" height="3.4" fill="#8fd0b0"/><path d="M456 48.5H463.6M461 45.6L464.2 48.5L461 51.4" fill="none" stroke="#3fae7c" stroke-width="1.4"/><path d="M508.2 45.2H524.6" stroke="#3b78c0" stroke-width="2.9"/><path d="M520.6 41L526 45.2L520.6 49.6" fill="none" stroke="#3b78c0" stroke-width="2.8"/><path d="M519 55H510.4" stroke="#40b080" stroke-width="2.9"/><path d="M514.4 50.8L509.2 55L514.4 59.4" fill="none" stroke="#40b080" stroke-width="2.8"/><circle cx="522.6" cy="55.3" r="4.6" fill="#3b78c0"/><path d="M520.8 54.2A2.2 2.2 0 1 0 523.4 53.3" fill="none" stroke="#d8e8f8" stroke-width="0.9"/><rect x="547.2" y="40.8" width="13.6" height="12" fill="#fff" stroke="#777" stroke-width="0.8"/><rect x="546.9" y="40.2" width="14.2" height="2.8" fill="#2f6fc0"/><rect x="551.6" y="46.6" width="13.6" height="12" fill="#fff" stroke="#777" stroke-width="0.8"/><rect x="551.3" y="46" width="14.2" height="2.8" fill="#2f6fc0"/><circle cx="562.2" cy="55.2" r="4.6" fill="#3b78c0"/><path d="M563.8 53.4A2.3 2.3 0 1 0 564.4 55.8" fill="none" stroke="#d8e8f8" stroke-width="0.9"/><rect x="588.3" y="44.4" width="17.4" height="14.2" fill="#fff" stroke="#8a8a8a" stroke-width="0.8"/><rect x="587.9" y="40.8" width="6" height="4.6" fill="#3b78c0"/><rect x="593.9" y="42.3" width="4" height="3.1" fill="#8e44c8"/><rect x="597.9" y="42.3" width="4" height="3.1" fill="#d06818"/><rect x="601.9" y="42.3" width="4.2" height="3.1" fill="#3a9a20"/><rect x="589.9" y="49.8" width="14" height="1.4" fill="#aaa"/><rect x="589.9" y="52.5" width="14" height="1.4" fill="#aaa"/><rect x="623.1999999999999" y="44.4" width="17.4" height="14.2" fill="#fff" stroke="#8a8a8a" stroke-width="0.8"/><rect x="622.8" y="40.8" width="6" height="4.6" fill="#3b78c0"/><rect x="628.8" y="42.3" width="4" height="3.1" fill="#8e44c8"/><rect x="632.8" y="42.3" width="4" height="3.1" fill="#d06818"/><rect x="636.8" y="42.3" width="4.2" height="3.1" fill="#3a9a20"/><rect x="624.8" y="47.3" width="14.2" height="1.4" fill="#4a8ad0"/><rect x="624.8" y="49.9" width="14.2" height="1.4" fill="#3a9a20"/><rect x="624.8" y="52.5" width="14.2" height="1.4" fill="#d87820"/><rect x="624.8" y="55.099999999999994" width="14.2" height="1.4" fill="#b85010"/><rect x="663.1" y="44.4" width="17.4" height="14.2" fill="#fff" stroke="#8a8a8a" stroke-width="0.8"/><rect x="662.7" y="40.8" width="6" height="4.6" fill="#3b78c0"/><rect x="668.7" y="42.3" width="4" height="3.1" fill="#8e44c8"/><rect x="672.7" y="42.3" width="4" height="3.1" fill="#d06818"/><rect x="676.7" y="42.3" width="4.2" height="3.1" fill="#3a9a20"/><rect x="664.7" y="47.3" width="14.2" height="1.4" fill="#4a8ad0"/><rect x="664.7" y="49.9" width="14.2" height="1.4" fill="#3a9a20"/><rect x="664.7" y="52.5" width="5" height="1.4" fill="#d87820"/><rect x="664.7" y="55.099999999999994" width="4" height="1.4" fill="#b85010"/><ellipse cx="675.8" cy="55.9" rx="6" ry="3.9" fill="#fdf6ea" stroke="#e8a040" stroke-width="1"/><circle cx="675.8" cy="55.6" r="2.5" fill="#3b78c0"/><circle cx="675.8" cy="55.4" r="1" fill="#1a3a6a"/><rect x="8.2" y="103.2" width="7.4" height="7.4" fill="#e8eef8" stroke="#1f4e9a" stroke-width="1"/><rect x="8" y="103" width="7.8" height="2" fill="#1f4e9a"/><rect x="11.4" y="106" width="6.6" height="6" fill="#f4f4e0" stroke="#6a8a1a" stroke-width="0.9"/><path d="M11.4 108.2H18M11.4 110H18" stroke="#6a8a1a" stroke-width="0.7"/><path d="M48.2 104.4H53L51.2 106.6V108.6L50 107.8V106.6Z" fill="#2f7fd8"/><path d="M8.2 118.2H12.4L10.8 120.2V122.6L9.8 121.8V120.2Z" fill="#888"/></svg>
<div class="r" style="left:0.00px;top:0.00px;width:840.00px;height:0.95px;background:#2c99b7;"></div>
<div class="r" style="left:0.00px;top:0.00px;width:0.95px;height:503.00px;background:#2c99b7;"></div>
<div class="r" style="left:839.10px;top:0.00px;width:0.90px;height:503.00px;background:#2c99b7;"></div>
<div class="r" style="left:0.00px;top:501.50px;width:840.00px;height:1.50px;background:#2c99b7;"></div>
</body></html>
